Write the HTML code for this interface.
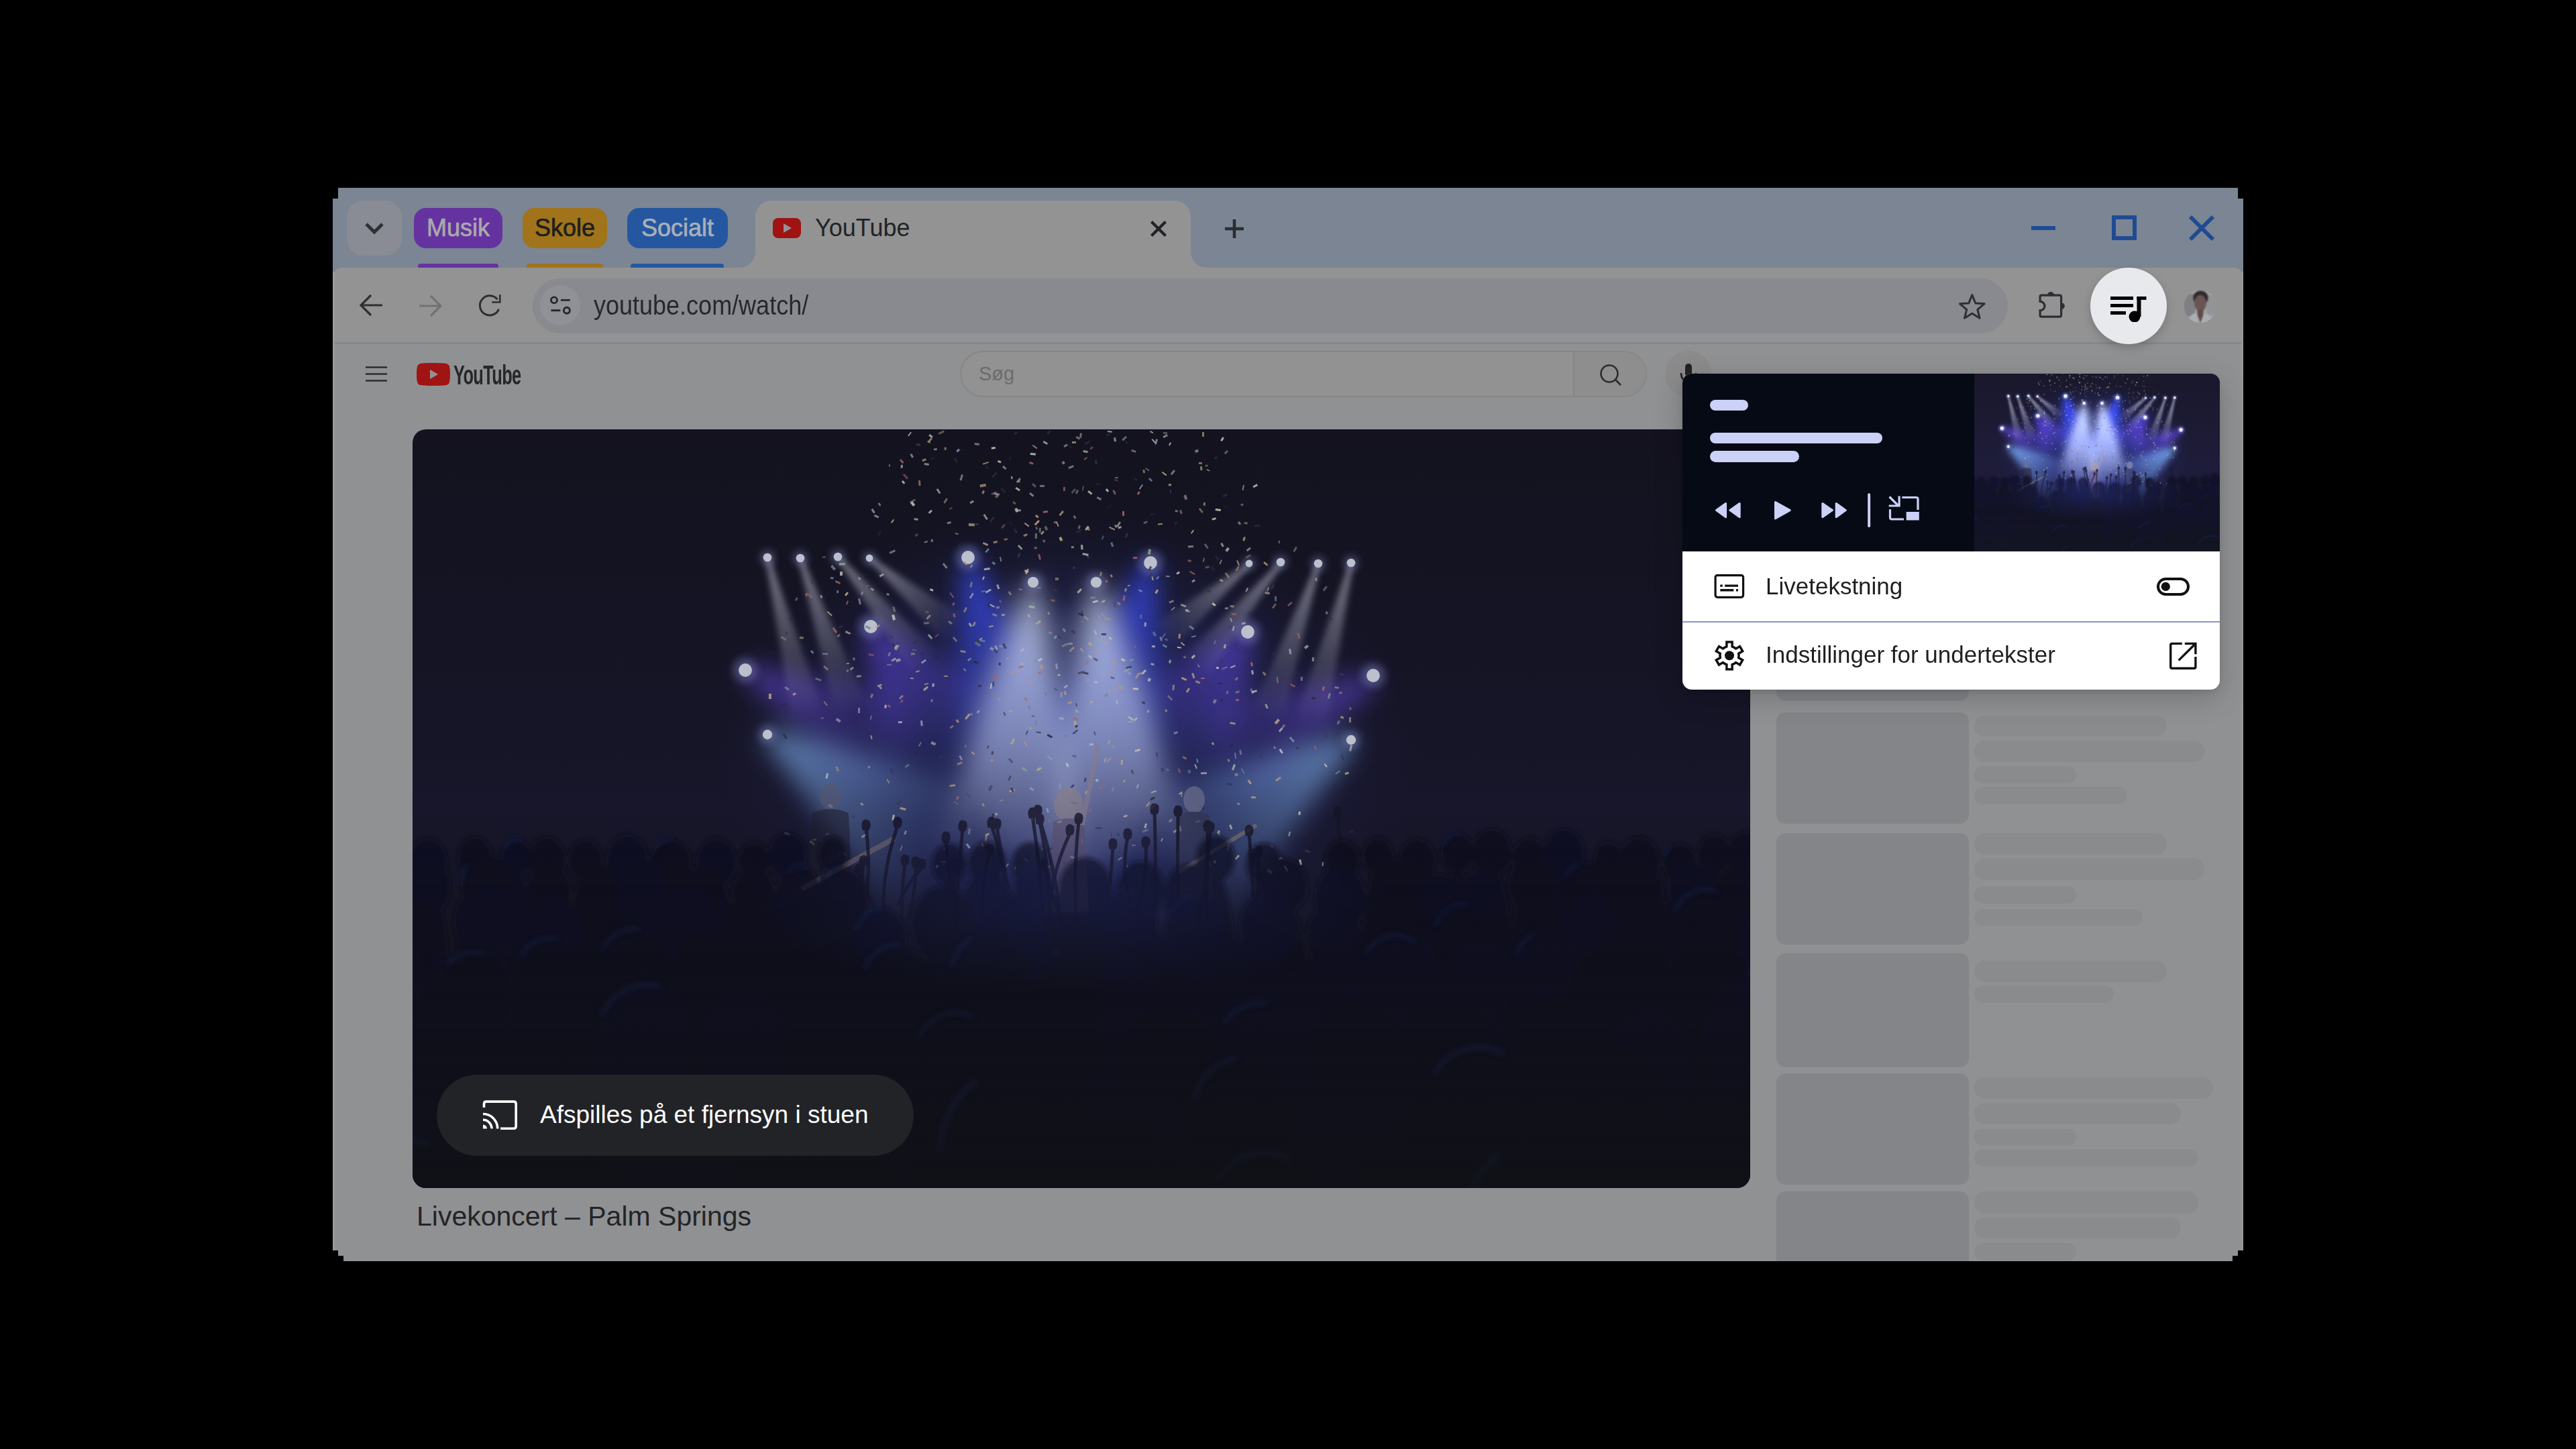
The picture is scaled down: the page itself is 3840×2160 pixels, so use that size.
<!DOCTYPE html>
<html><head><meta charset="utf-8">
<style>
html,body{margin:0;padding:0;width:3840px;height:2160px;overflow:hidden;background:#000;}
body{position:relative;font-family:"Liberation Sans",sans-serif;}
.a{position:absolute;}
.win{left:496px;top:280px;width:2848px;height:1600px;background:#7b8593;overflow:hidden;}
.notch{background:#000;position:absolute;}
.tb{left:496px;top:399px;width:2848px;height:114px;background:#939393;border-radius:14px 14px 0 0;}
.page{left:496px;top:510px;width:2848px;height:1370px;background:#909193;border-top:3px solid #868787;box-sizing:border-box;}
.chip{position:absolute;top:310px;height:60px;border-radius:18px;font-size:36px;line-height:60px;text-align:center;-webkit-text-stroke:0.7px currentColor;}
.uline{position:absolute;top:393px;height:6px;border-radius:4px 4px 0 0;}
.txt{white-space:nowrap;}
</style></head>
<body>
<div class="a win"></div>
<!-- tab strip -->
<div class="a" style="left:517px;top:299px;width:82px;height:82px;border-radius:24px;background:#898c94"></div>
<svg class="a" style="left:541px;top:328px" width="34" height="26" viewBox="0 0 34 26"><path d="M5 6 L17 18 L29 6" fill="none" stroke="#2e3035" stroke-width="5"/></svg>

<div class="chip" style="left:617px;width:132px;background:#6533a0;color:#a9a9ab">Musik</div>
<div class="uline" style="left:623px;width:120px;background:#6633a3"></div>
<div class="chip" style="left:779px;width:126px;background:#a1741b;color:#1f1f1f">Skole</div>
<div class="uline" style="left:785px;width:114px;background:#a1741b"></div>
<div class="chip" style="left:935px;width:150px;background:#2457a0;color:#a9afb9">Socialt</div>
<div class="uline" style="left:940px;width:139px;background:#2457a0"></div>

<!-- active tab -->
<div class="a" style="left:1126px;top:299px;width:649px;height:100px;background:#939393;border-radius:24px 24px 0 0"></div>
<div class="a" style="left:1102px;top:375px;width:24px;height:24px;background:radial-gradient(circle at 0 0,transparent 23.5px,#939393 24.5px)"></div>
<div class="a" style="left:1775px;top:375px;width:24px;height:24px;background:radial-gradient(circle at 24px 0,transparent 23.5px,#939393 24.5px)"></div>
<svg class="a" style="left:1152px;top:325px" width="42" height="30" viewBox="0 0 42 30"><rect x="0" y="0" width="42" height="30" rx="8" fill="#a01313"/><path d="M16 8 L28 15 L16 22Z" fill="#939393"/></svg>
<div class="a txt" style="left:1215px;top:318px;font-size:36px;line-height:44px;color:#222326">YouTube</div>
<svg class="a" style="left:1713px;top:327px" width="28" height="28" viewBox="0 0 28 28"><path d="M3.5 3.5 L24.5 24.5 M24.5 3.5 L3.5 24.5" stroke="#222326" stroke-width="4.3"/></svg>
<svg class="a" style="left:1824px;top:325px" width="32" height="32" viewBox="0 0 32 32"><path d="M16 2 V30 M2 16 H30" stroke="#2a2c30" stroke-width="4.5"/></svg>

<!-- window controls -->
<div class="a" style="left:3028px;top:337px;width:36px;height:6px;background:#1f4b94"></div>
<div class="a" style="left:3148px;top:321px;width:25px;height:25px;border:6px solid #1f4b94"></div>
<svg class="a" style="left:3262px;top:320px" width="40" height="40" viewBox="0 0 40 40"><path d="M3 3 L37 37 M37 3 L3 37" stroke="#1f4b94" stroke-width="6"/></svg>

<!-- toolbar -->
<div class="a tb"></div>
<svg class="a" style="left:534px;top:435px" width="40" height="40" viewBox="0 0 40 40"><path d="M36 20 H6 M19 5 L4 20 L19 35" fill="none" stroke="#2d2f33" stroke-width="3.2"/></svg>
<svg class="a" style="left:621px;top:436px" width="40" height="40" viewBox="0 0 40 40"><path d="M4 20 H34 M21 5 L36 20 L21 35" fill="none" stroke="#707276" stroke-width="3.2"/></svg>
<svg class="a" style="left:700px;top:425px" width="60" height="60" viewBox="700 425 60 60"><path d="M741.50 446.41 A14.6 14.6 0 1 0 743.54 460.87" fill="none" stroke="#2d2f33" stroke-width="3"/><path d="M733.3 450.55 H745.25 V439.2" fill="none" stroke="#2d2f33" stroke-width="2.6"/></svg>
<div class="a" style="left:794px;top:415px;width:2199px;height:82px;border-radius:41px;background:#888a8f"></div>
<div class="a" style="left:805px;top:425px;width:60px;height:60px;border-radius:30px;background:#8f9196"></div>
<svg class="a" style="left:810px;top:430px" width="50" height="50" viewBox="810 430 50 50" fill="none" stroke="#26282c" stroke-width="2.9"><circle cx="826" cy="447.4" r="4.5"/><path d="M836 447.4 H849.8 M821.4 462.7 H835.3"/><circle cx="844.9" cy="462.7" r="4.5"/></svg>
<div class="a txt" style="left:885px;top:430px;font-size:40px;line-height:50px;color:#26282c;transform:scaleX(0.9);transform-origin:0 0">youtube.com/watch/</div>
<svg class="a" style="left:2910px;top:428px" width="60" height="60" viewBox="2910 428 60 60"><path d="M2939.80 439.60 L2944.80 451.92 L2958.06 452.87 L2947.88 461.43 L2951.09 474.33 L2939.80 467.30 L2928.51 474.33 L2931.72 461.43 L2921.54 452.87 L2934.80 451.92Z" fill="none" stroke="#2d2f33" stroke-width="3" stroke-linejoin="round"/></svg>
<svg class="a" style="left:3030px;top:425px" width="60" height="60" viewBox="3030 425 60 60"><path d="M3041.1 449.3 V442.2 Q3041.1 440.1 3043.2 440.1 H3070.5 Q3072.6 440.1 3072.6 442.2 V470 Q3072.6 472.1 3070.5 472.1 H3043.2 Q3041.1 472.1 3041.1 470 V462.9 A6.8 6.8 0 0 0 3041.1 449.3Z" fill="none" stroke="#2d2f33" stroke-width="3.2"/><path d="M3051.8 440.1 A5.2 5.2 0 0 1 3062.2 440.1Z" fill="#2d2f33"/><path d="M3072.6 451 A5.2 5.2 0 0 1 3072.6 461.4Z" fill="#2d2f33"/></svg>
<div class="a" style="left:3116px;top:399px;width:114px;height:114px;border-radius:57px;background:#e8e9ed;box-shadow:0 6px 14px rgba(0,0,0,0.18);z-index:5"></div>
<svg class="a" style="left:3140px;top:436px;z-index:6" width="66" height="44" viewBox="0 0 66 44"><rect x="6" y="6" width="34" height="5" fill="#000"/><rect x="6" y="17" width="34" height="5" fill="#000"/><rect x="6" y="28" width="23" height="5" fill="#000"/><rect x="45.5" y="6" width="6" height="30" fill="#000"/><rect x="45.5" y="6" width="14" height="5" fill="#000"/><circle cx="42" cy="36" r="8.5" fill="#000"/></svg>
<svg class="a" style="left:3255px;top:432px" width="50" height="50" viewBox="0 0 50 50"><defs><clipPath id="avc"><circle cx="25" cy="24.5" r="24.5"/></clipPath><filter id="avb"><feGaussianBlur stdDeviation="0.8"/></filter></defs><g clip-path="url(#avc)"><g filter="url(#avb)"><rect width="50" height="50" fill="#9fa0a2"/><rect x="0" y="6" width="17" height="34" fill="#7f8083"/><rect x="34" y="8" width="16" height="30" fill="#939497"/><ellipse cx="25.5" cy="12" rx="11.5" ry="11" fill="#2e2c2e"/><ellipse cx="25" cy="20.5" rx="9" ry="12.5" fill="#6a5552"/><rect x="20.5" y="30" width="9" height="20" fill="#5f4a48"/><path d="M4 50 Q8 37 19 34 L25 50 L31 34 Q42 37 46 50Z" fill="#acadaf"/></g></g></svg>

<!-- page -->
<div class="a page"></div>
<svg class="a" style="left:544px;top:545px" width="34" height="26" viewBox="0 0 34 26"><path d="M1 2.5 H33 M1 12.5 H33 M1 22.5 H33" stroke="#2b2c2e" stroke-width="2.6"/></svg>
<svg class="a" style="left:621px;top:541px" width="50" height="34" viewBox="0 0 50 34"><path d="M48.9 5.3 C48.3 3.2 46.7 1.6 44.6 1 C40.8 0 25 0 25 0 C25 0 9.2 0 5.4 1 C3.3 1.6 1.7 3.2 1.1 5.3 C0 9.1 0 17 0 17 C0 17 0 24.9 1.1 28.7 C1.7 30.8 3.3 32.4 5.4 33 C9.2 34 25 34 25 34 C25 34 40.8 34 44.6 33 C46.7 32.4 48.3 30.8 48.9 28.7 C50 24.9 50 17 50 17 C50 17 50 9.1 48.9 5.3Z" fill="#a01414"/><path d="M20 10 L32 17 L20 24Z" fill="#939393"/></svg>
<div class="a txt" style="left:676px;top:536px;font-size:41px;line-height:46px;font-weight:bold;color:#262729;letter-spacing:-1px;transform:scaleX(0.62);transform-origin:0 0">YouTube</div>
<div class="a" style="left:1431px;top:523px;width:1024px;height:69px;box-sizing:border-box;border:2px solid #868687;border-radius:35px;background:#929293"></div>
<div class="a" style="left:2345px;top:525px;width:2px;height:65px;background:#868687"></div>
<div class="a" style="left:2347px;top:525px;width:106px;height:65px;border-radius:0 33px 33px 0;background:#8e8e8f"></div>
<div class="a txt" style="left:1459px;top:539px;font-size:29px;line-height:36px;color:#6b6c6e">Søg</div>
<svg class="a" style="left:2382px;top:540px" width="38" height="38" viewBox="0 0 38 38"><circle cx="17" cy="17" r="12.5" fill="none" stroke="#2b2c2e" stroke-width="2.6"/><path d="M26 26 L34 34" stroke="#2b2c2e" stroke-width="2.6"/></svg>
<div class="a" style="left:2482px;top:523px;width:69px;height:69px;border-radius:35px;background:#8b8b8c"></div>
<!-- video -->
<svg class="a" style="left:615px;top:640px" width="1994" height="1131" viewBox="0 0 1994 1131"><defs><clipPath id="vclip"><rect width="1994" height="1131" rx="20"/></clipPath></defs><g clip-path="url(#vclip)"><defs>
<linearGradient id="bgG" x1="0" y1="0" x2="0" y2="1"><stop offset="0" stop-color="#13121e"/><stop offset="0.5" stop-color="#17162a"/><stop offset="1" stop-color="#131419"/></linearGradient>
<radialGradient id="glowG"><stop offset="0" stop-color="#3848a8" stop-opacity="0.55"/><stop offset="0.55" stop-color="#303890" stop-opacity="0.3"/><stop offset="1" stop-color="#202050" stop-opacity="0"/></radialGradient>
<radialGradient id="hazeG"><stop offset="0" stop-color="#3a4aa8" stop-opacity="0.22"/><stop offset="1" stop-color="#3a4aa8" stop-opacity="0"/></radialGradient>
<linearGradient id="botG" x1="0" y1="0" x2="0" y2="1"><stop offset="0.55" stop-color="#111216" stop-opacity="0"/><stop offset="0.85" stop-color="#111216" stop-opacity="0.45"/><stop offset="1" stop-color="#111216" stop-opacity="0.8"/></linearGradient>
<filter id="blurW" filterUnits="userSpaceOnUse" x="0" y="0" width="1994" height="1131"><feGaussianBlur stdDeviation="18"/></filter>
<filter id="blurT" filterUnits="userSpaceOnUse" x="0" y="0" width="1994" height="1131"><feGaussianBlur stdDeviation="5"/></filter>
<filter id="blurS" filterUnits="userSpaceOnUse" x="0" y="0" width="1994" height="1131"><feGaussianBlur stdDeviation="6"/></filter>
<filter id="blurH" filterUnits="userSpaceOnUse" x="0" y="0" width="1994" height="1131"><feGaussianBlur stdDeviation="4"/></filter>
<filter id="blurC" filterUnits="userSpaceOnUse" x="0" y="0" width="1994" height="1131"><feGaussianBlur stdDeviation="3"/></filter>
<linearGradient id="b1" gradientUnits="userSpaceOnUse" x1="828" y1="191" x2="905" y2="500"><stop offset="0" stop-color="#3a4cf0" stop-opacity="0.85"/><stop offset="0.5" stop-color="#3a4cf0" stop-opacity="0.42"/><stop offset="1" stop-color="#3a4cf0" stop-opacity="0"/></linearGradient><linearGradient id="b2" gradientUnits="userSpaceOnUse" x1="1100" y1="196" x2="1023" y2="505"><stop offset="0" stop-color="#3a4cf0" stop-opacity="0.85"/><stop offset="0.5" stop-color="#3a4cf0" stop-opacity="0.42"/><stop offset="1" stop-color="#3a4cf0" stop-opacity="0"/></linearGradient><linearGradient id="b3" gradientUnits="userSpaceOnUse" x1="683" y1="294" x2="800" y2="470"><stop offset="0" stop-color="#6048e0" stop-opacity="0.7"/><stop offset="0.5" stop-color="#6048e0" stop-opacity="0.35"/><stop offset="1" stop-color="#6048e0" stop-opacity="0"/></linearGradient><linearGradient id="b4" gradientUnits="userSpaceOnUse" x1="1245" y1="300" x2="1128" y2="476"><stop offset="0" stop-color="#6048e0" stop-opacity="0.7"/><stop offset="0.5" stop-color="#6048e0" stop-opacity="0.35"/><stop offset="1" stop-color="#6048e0" stop-opacity="0"/></linearGradient><linearGradient id="b5" gradientUnits="userSpaceOnUse" x1="496" y1="359" x2="740" y2="480"><stop offset="0" stop-color="#6048d0" stop-opacity="0.7"/><stop offset="0.5" stop-color="#6048d0" stop-opacity="0.35"/><stop offset="1" stop-color="#6048d0" stop-opacity="0"/></linearGradient><linearGradient id="b6" gradientUnits="userSpaceOnUse" x1="1432" y1="373" x2="1188" y2="494"><stop offset="0" stop-color="#6048d0" stop-opacity="0.7"/><stop offset="0.5" stop-color="#6048d0" stop-opacity="0.35"/><stop offset="1" stop-color="#6048d0" stop-opacity="0"/></linearGradient><linearGradient id="b7" gradientUnits="userSpaceOnUse" x1="529" y1="455" x2="800" y2="640"><stop offset="0" stop-color="#80b0f0" stop-opacity="0.7"/><stop offset="0.5" stop-color="#80b0f0" stop-opacity="0.35"/><stop offset="1" stop-color="#80b0f0" stop-opacity="0"/></linearGradient><linearGradient id="b8" gradientUnits="userSpaceOnUse" x1="1399" y1="464" x2="1128" y2="649"><stop offset="0" stop-color="#80b0f0" stop-opacity="0.7"/><stop offset="0.5" stop-color="#80b0f0" stop-opacity="0.35"/><stop offset="1" stop-color="#80b0f0" stop-opacity="0"/></linearGradient><linearGradient id="b9" gradientUnits="userSpaceOnUse" x1="925" y1="228" x2="890" y2="660"><stop offset="0" stop-color="#d0dcf8" stop-opacity="0.8"/><stop offset="0.6" stop-color="#d0dcf8" stop-opacity="0.40"/><stop offset="1" stop-color="#d0dcf8" stop-opacity="0"/></linearGradient><linearGradient id="b10" gradientUnits="userSpaceOnUse" x1="1019" y1="228" x2="1055" y2="660"><stop offset="0" stop-color="#d0dcf8" stop-opacity="0.8"/><stop offset="0.6" stop-color="#d0dcf8" stop-opacity="0.40"/><stop offset="1" stop-color="#d0dcf8" stop-opacity="0"/></linearGradient><linearGradient id="b11" gradientUnits="userSpaceOnUse" x1="529" y1="191" x2="590" y2="430"><stop offset="0" stop-color="#c8c8dc" stop-opacity="0.55"/><stop offset="0.5" stop-color="#c8c8dc" stop-opacity="0.28"/><stop offset="1" stop-color="#c8c8dc" stop-opacity="0"/></linearGradient><linearGradient id="b12" gradientUnits="userSpaceOnUse" x1="1399" y1="201" x2="1338" y2="440"><stop offset="0" stop-color="#c8c8dc" stop-opacity="0.55"/><stop offset="0.5" stop-color="#c8c8dc" stop-opacity="0.28"/><stop offset="1" stop-color="#c8c8dc" stop-opacity="0"/></linearGradient><linearGradient id="b13" gradientUnits="userSpaceOnUse" x1="578" y1="192" x2="655" y2="420"><stop offset="0" stop-color="#c8c8dc" stop-opacity="0.55"/><stop offset="0.5" stop-color="#c8c8dc" stop-opacity="0.28"/><stop offset="1" stop-color="#c8c8dc" stop-opacity="0"/></linearGradient><linearGradient id="b14" gradientUnits="userSpaceOnUse" x1="1350" y1="202" x2="1273" y2="430"><stop offset="0" stop-color="#c8c8dc" stop-opacity="0.55"/><stop offset="0.5" stop-color="#c8c8dc" stop-opacity="0.28"/><stop offset="1" stop-color="#c8c8dc" stop-opacity="0"/></linearGradient><linearGradient id="b15" gradientUnits="userSpaceOnUse" x1="634" y1="190" x2="765" y2="350"><stop offset="0" stop-color="#c8c8dc" stop-opacity="0.55"/><stop offset="0.5" stop-color="#c8c8dc" stop-opacity="0.28"/><stop offset="1" stop-color="#c8c8dc" stop-opacity="0"/></linearGradient><linearGradient id="b16" gradientUnits="userSpaceOnUse" x1="1294" y1="200" x2="1163" y2="360"><stop offset="0" stop-color="#c8c8dc" stop-opacity="0.55"/><stop offset="0.5" stop-color="#c8c8dc" stop-opacity="0.28"/><stop offset="1" stop-color="#c8c8dc" stop-opacity="0"/></linearGradient><linearGradient id="b17" gradientUnits="userSpaceOnUse" x1="681" y1="192" x2="810" y2="300"><stop offset="0" stop-color="#c8c8dc" stop-opacity="0.55"/><stop offset="0.5" stop-color="#c8c8dc" stop-opacity="0.28"/><stop offset="1" stop-color="#c8c8dc" stop-opacity="0"/></linearGradient><linearGradient id="b18" gradientUnits="userSpaceOnUse" x1="1247" y1="202" x2="1118" y2="310"><stop offset="0" stop-color="#c8c8dc" stop-opacity="0.55"/><stop offset="0.5" stop-color="#c8c8dc" stop-opacity="0.28"/><stop offset="1" stop-color="#c8c8dc" stop-opacity="0"/></linearGradient></defs><g id="scene"><rect width="1994" height="1131" fill="url(#bgG)"/><ellipse cx="975" cy="470" rx="520" ry="360" fill="url(#glowG)"/><g filter="url(#blurW)"><polygon points="822,192 803,525 1007,475 834,190" fill="url(#b1)"/><polygon points="1094,195 921,480 1125,530 1106,197" fill="url(#b2)"/><polygon points="676,298 708,531 892,409 690,290" fill="url(#b3)"/><polygon points="1238,296 1036,415 1220,537 1252,304" fill="url(#b4)"/><polygon points="492,366 700,561 780,399 500,352" fill="url(#b5)"/><polygon points="1428,366 1148,413 1228,575 1436,380" fill="url(#b6)"/><polygon points="524,462 732,739 868,541 534,448" fill="url(#b7)"/><polygon points="1394,457 1060,550 1196,748 1404,471" fill="url(#b8)"/><polygon points="919,228 770,650 1010,670 931,228" fill="url(#b9)"/><polygon points="1013,228 935,670 1175,650 1025,228" fill="url(#b10)"/><ellipse cx="972" cy="470" rx="140" ry="200" fill="#b0bce8" opacity="0.16"/></g><g filter="url(#blurT)"><polygon points="526,192 567,436 613,424 532,190" fill="url(#b11)"/><polygon points="1396,200 1315,434 1361,446 1402,202" fill="url(#b12)"/><polygon points="575,193 632,428 678,412 581,191" fill="url(#b13)"/><polygon points="1347,201 1250,422 1296,438 1353,203" fill="url(#b14)"/><polygon points="632,192 746,365 784,335 636,188" fill="url(#b15)"/><polygon points="1292,198 1144,345 1182,375 1296,202" fill="url(#b16)"/><polygon points="679,194 795,318 825,282 683,190" fill="url(#b17)"/><polygon points="1245,200 1103,292 1133,328 1249,204" fill="url(#b18)"/></g><g filter="url(#blurS)"><circle cx="529" cy="191" r="11" fill="#a8b4ff" opacity="0.3"/><circle cx="1399" cy="199" r="11" fill="#a8b4ff" opacity="0.3"/><circle cx="578" cy="192" r="11" fill="#a8b4ff" opacity="0.3"/><circle cx="1350" cy="200" r="11" fill="#a8b4ff" opacity="0.3"/><circle cx="634" cy="190" r="11" fill="#a8b4ff" opacity="0.3"/><circle cx="1294" cy="198" r="11" fill="#a8b4ff" opacity="0.3"/><circle cx="681" cy="192" r="10" fill="#a8b4ff" opacity="0.3"/><circle cx="1247" cy="200" r="10" fill="#a8b4ff" opacity="0.3"/><circle cx="828" cy="191" r="18" fill="#a8b4ff" opacity="0.3"/><circle cx="1100" cy="199" r="18" fill="#a8b4ff" opacity="0.3"/><circle cx="925" cy="228" r="14" fill="#a8b4ff" opacity="0.3"/><circle cx="683" cy="294" r="18" fill="#a8b4ff" opacity="0.3"/><circle cx="1245" cy="302" r="18" fill="#a8b4ff" opacity="0.3"/><circle cx="496" cy="359" r="18" fill="#a8b4ff" opacity="0.3"/><circle cx="1432" cy="367" r="18" fill="#a8b4ff" opacity="0.3"/><circle cx="529" cy="455" r="13" fill="#a8b4ff" opacity="0.3"/><circle cx="1399" cy="463" r="13" fill="#a8b4ff" opacity="0.3"/><circle cx="1019" cy="228" r="14" fill="#a8b4ff" opacity="0.3"/></g><circle cx="529" cy="191" r="6.3" fill="#bcc0cc"/><circle cx="1399" cy="199" r="6.3" fill="#bcc0cc"/><circle cx="578" cy="192" r="6.3" fill="#bcc0cc"/><circle cx="1350" cy="200" r="6.3" fill="#bcc0cc"/><circle cx="634" cy="190" r="6.3" fill="#bcc0cc"/><circle cx="1294" cy="198" r="6.3" fill="#bcc0cc"/><circle cx="681" cy="192" r="5.4" fill="#bcc0cc"/><circle cx="1247" cy="200" r="5.4" fill="#bcc0cc"/><circle cx="828" cy="191" r="9.9" fill="#bcc0cc"/><circle cx="1100" cy="199" r="9.9" fill="#bcc0cc"/><circle cx="925" cy="228" r="8.1" fill="#bcc0cc"/><circle cx="683" cy="294" r="9.9" fill="#bcc0cc"/><circle cx="1245" cy="302" r="9.9" fill="#bcc0cc"/><circle cx="496" cy="359" r="9.9" fill="#bcc0cc"/><circle cx="1432" cy="367" r="9.9" fill="#bcc0cc"/><circle cx="529" cy="455" r="7.2" fill="#bcc0cc"/><circle cx="1399" cy="463" r="7.2" fill="#bcc0cc"/><circle cx="1019" cy="228" r="8.1" fill="#bcc0cc"/><g><rect x="608" y="610" width="7" height="3" fill="#383850" opacity="0.66" transform="rotate(33 608 610)"/><rect x="1088" y="405" width="5" height="3" fill="#383850" opacity="0.81" transform="rotate(26 1088 405)"/><rect x="944" y="648" width="7" height="3" fill="#b89878" opacity="0.82" transform="rotate(28 944 648)"/><rect x="893" y="42" width="4" height="3" fill="#2a2a3a" opacity="0.60" transform="rotate(108 893 42)"/><rect x="809" y="154" width="5" height="2" fill="#8898b8" opacity="0.63" transform="rotate(15 809 154)"/><rect x="868" y="364" width="9" height="2" fill="#a06868" opacity="0.68" transform="rotate(46 868 364)"/><rect x="1047" y="71" width="5" height="2" fill="#b89878" opacity="0.55" transform="rotate(3 1047 71)"/><rect x="1063" y="248" width="8" height="3" fill="#a06868" opacity="0.80" transform="rotate(102 1063 248)"/><rect x="931" y="178" width="4" height="3" fill="#98b098" opacity="0.51" transform="rotate(174 931 178)"/><rect x="963" y="307" width="6" height="3" fill="#383850" opacity="0.54" transform="rotate(34 963 307)"/><rect x="883" y="278" width="5" height="3" fill="#c8c0b0" opacity="0.59" transform="rotate(175 883 278)"/><rect x="1182" y="170" width="8" height="3" fill="#98b098" opacity="0.48" transform="rotate(53 1182 170)"/><rect x="961" y="138" width="7" height="2" fill="#c8c0b0" opacity="0.65" transform="rotate(66 961 138)"/><rect x="1309" y="379" width="8" height="2" fill="#a06868" opacity="0.82" transform="rotate(28 1309 379)"/><rect x="887" y="165" width="5" height="3" fill="#a06868" opacity="0.76" transform="rotate(169 887 165)"/><rect x="712" y="52" width="4" height="2" fill="#8898b8" opacity="0.56" transform="rotate(92 712 52)"/><rect x="1156" y="194" width="5" height="3" fill="#a06868" opacity="0.67" transform="rotate(12 1156 194)"/><rect x="613" y="431" width="4" height="2" fill="#b89878" opacity="0.48" transform="rotate(165 613 431)"/><rect x="782" y="31" width="5" height="3" fill="#98b098" opacity="0.61" transform="rotate(175 782 31)"/><rect x="1095" y="588" width="7" height="3" fill="#c0c0c8" opacity="0.72" transform="rotate(105 1095 588)"/><rect x="1277" y="236" width="6" height="2" fill="#98b098" opacity="0.67" transform="rotate(108 1277 236)"/><rect x="1094" y="360" width="8" height="3" fill="#c0c0c8" opacity="0.81" transform="rotate(133 1094 360)"/><rect x="719" y="575" width="8" height="3" fill="#c8c0b0" opacity="0.75" transform="rotate(103 719 575)"/><rect x="1091" y="60" width="5" height="3" fill="#b8a880" opacity="0.62" transform="rotate(75 1091 60)"/><rect x="984" y="485" width="6" height="3" fill="#383850" opacity="0.46" transform="rotate(15 984 485)"/><rect x="699" y="152" width="7" height="3" fill="#2a2a3a" opacity="0.57" transform="rotate(111 699 152)"/><rect x="771" y="7" width="6" height="3" fill="#c0c0c8" opacity="0.79" transform="rotate(36 771 7)"/><rect x="595" y="329" width="5" height="3" fill="#708890" opacity="0.81" transform="rotate(45 595 329)"/><rect x="1039" y="145" width="9" height="2" fill="#b8a880" opacity="0.83" transform="rotate(24 1039 145)"/><rect x="1173" y="560" width="9" height="3" fill="#2a2a3a" opacity="0.66" transform="rotate(30 1173 560)"/><rect x="721" y="343" width="7" height="3" fill="#c8c0b0" opacity="0.65" transform="rotate(152 721 343)"/><rect x="1009" y="468" width="6" height="3" fill="#c0c0c8" opacity="0.63" transform="rotate(3 1009 468)"/><rect x="1164" y="176" width="8" height="3" fill="#98b098" opacity="0.65" transform="rotate(177 1164 176)"/><rect x="669" y="633" width="5" height="3" fill="#b89878" opacity="0.79" transform="rotate(32 669 633)"/><rect x="1184" y="514" width="9" height="3" fill="#c0c0c8" opacity="0.63" transform="rotate(179 1184 514)"/><rect x="1023" y="523" width="4" height="4" fill="#c0c0c8" opacity="0.65" transform="rotate(130 1023 523)"/><rect x="1180" y="4" width="7" height="3" fill="#b8a880" opacity="0.66" transform="rotate(90 1180 4)"/><rect x="1109" y="540" width="8" height="2" fill="#98b098" opacity="0.89" transform="rotate(162 1109 540)"/><rect x="1042" y="601" width="6" height="2" fill="#383850" opacity="0.64" transform="rotate(79 1042 601)"/><rect x="720" y="182" width="9" height="3" fill="#708890" opacity="0.81" transform="rotate(156 720 182)"/><rect x="1215" y="98" width="7" height="3" fill="#2a2a3a" opacity="0.88" transform="rotate(151 1215 98)"/><rect x="1009" y="146" width="7" height="3" fill="#c0c0c8" opacity="0.69" transform="rotate(131 1009 146)"/><rect x="1188" y="206" width="6" height="3" fill="#a06868" opacity="0.59" transform="rotate(162 1188 206)"/><rect x="745" y="328" width="6" height="2" fill="#708890" opacity="0.46" transform="rotate(1 745 328)"/><rect x="909" y="640" width="6" height="3" fill="#2a2a3a" opacity="0.49" transform="rotate(101 909 640)"/><rect x="1321" y="303" width="9" height="3" fill="#a06868" opacity="0.66" transform="rotate(73 1321 303)"/><rect x="1198" y="315" width="6" height="2" fill="#8898b8" opacity="0.51" transform="rotate(111 1198 315)"/><rect x="987" y="128" width="5" height="3" fill="#b8a880" opacity="0.56" transform="rotate(58 987 128)"/><rect x="912" y="329" width="6" height="3" fill="#c8c0b0" opacity="0.56" transform="rotate(153 912 329)"/><rect x="1094" y="288" width="6" height="3" fill="#c0c0c8" opacity="0.69" transform="rotate(95 1094 288)"/><rect x="1324" y="570" width="5" height="3" fill="#c8c0b0" opacity="0.84" transform="rotate(98 1324 570)"/><rect x="1029" y="535" width="6" height="3" fill="#a06868" opacity="0.80" transform="rotate(166 1029 535)"/><rect x="731" y="621" width="8" height="2" fill="#b89878" opacity="0.49" transform="rotate(113 731 621)"/><rect x="1183" y="376" width="6" height="3" fill="#383850" opacity="0.74" transform="rotate(65 1183 376)"/><rect x="909" y="503" width="9" height="3" fill="#98b098" opacity="0.54" transform="rotate(34 909 503)"/><rect x="982" y="555" width="9" height="2" fill="#2a2a3a" opacity="0.48" transform="rotate(11 982 555)"/><rect x="1220" y="281" width="6" height="2" fill="#b89878" opacity="0.83" transform="rotate(67 1220 281)"/><rect x="1146" y="120" width="6" height="3" fill="#a06868" opacity="0.72" transform="rotate(73 1146 120)"/><rect x="1309" y="600" width="7" height="2" fill="#b8a880" opacity="0.81" transform="rotate(105 1309 600)"/><rect x="1396" y="513" width="6" height="3" fill="#b8a880" opacity="0.80" transform="rotate(158 1396 513)"/><rect x="713" y="505" width="8" height="2" fill="#2a2a3a" opacity="0.50" transform="rotate(62 713 505)"/><rect x="865" y="197" width="5" height="3" fill="#98b098" opacity="0.63" transform="rotate(33 865 197)"/><rect x="683" y="503" width="4" height="3" fill="#8898b8" opacity="0.65" transform="rotate(133 683 503)"/><rect x="611" y="333" width="8" height="3" fill="#8898b8" opacity="0.56" transform="rotate(2 611 333)"/><rect x="1289" y="335" width="9" height="3" fill="#2a2a3a" opacity="0.81" transform="rotate(179 1289 335)"/><rect x="763" y="50" width="7" height="3" fill="#c0c0c8" opacity="0.62" transform="rotate(8 763 50)"/><rect x="865" y="394" width="6" height="3" fill="#708890" opacity="0.72" transform="rotate(51 865 394)"/><rect x="812" y="432" width="5" height="3" fill="#b89878" opacity="0.80" transform="rotate(53 812 432)"/><rect x="1159" y="387" width="7" height="3" fill="#b89878" opacity="0.85" transform="rotate(123 1159 387)"/><rect x="974" y="653" width="4" height="3" fill="#2a2a3a" opacity="0.56" transform="rotate(77 974 653)"/><rect x="919" y="275" width="5" height="3" fill="#c0c0c8" opacity="0.51" transform="rotate(64 919 275)"/><rect x="558" y="301" width="5" height="3" fill="#383850" opacity="0.82" transform="rotate(76 558 301)"/><rect x="1131" y="90" width="5" height="2" fill="#383850" opacity="0.85" transform="rotate(87 1131 90)"/><rect x="1065" y="237" width="5" height="3" fill="#c8c0b0" opacity="0.54" transform="rotate(102 1065 237)"/><rect x="1024" y="331" width="7" height="2" fill="#b89878" opacity="0.45" transform="rotate(123 1024 331)"/><rect x="1057" y="147" width="5" height="3" fill="#c0c0c8" opacity="0.70" transform="rotate(164 1057 147)"/><rect x="989" y="417" width="6" height="3" fill="#b8a880" opacity="0.67" transform="rotate(38 989 417)"/><rect x="1380" y="529" width="8" height="3" fill="#2a2a3a" opacity="0.64" transform="rotate(138 1380 529)"/><rect x="1081" y="431" width="6" height="3" fill="#c0c0c8" opacity="0.64" transform="rotate(134 1081 431)"/><rect x="707" y="244" width="4" height="3" fill="#98b098" opacity="0.64" transform="rotate(14 707 244)"/><rect x="732" y="398" width="7" height="3" fill="#b8a880" opacity="0.58" transform="rotate(138 732 398)"/><rect x="672" y="242" width="5" height="3" fill="#8898b8" opacity="0.65" transform="rotate(102 672 242)"/><rect x="850" y="617" width="5" height="3" fill="#b8a880" opacity="0.75" transform="rotate(66 850 617)"/><rect x="1251" y="386" width="8" height="3" fill="#708890" opacity="0.69" transform="rotate(66 1251 386)"/><rect x="1174" y="117" width="8" height="3" fill="#b89878" opacity="0.55" transform="rotate(51 1174 117)"/><rect x="1111" y="15" width="8" height="3" fill="#8898b8" opacity="0.80" transform="rotate(105 1111 15)"/><rect x="1186" y="55" width="4" height="3" fill="#98b098" opacity="0.46" transform="rotate(162 1186 55)"/><rect x="898" y="539" width="8" height="3" fill="#b8a880" opacity="0.79" transform="rotate(163 898 539)"/><rect x="863" y="260" width="6" height="4" fill="#2a2a3a" opacity="0.67" transform="rotate(121 863 260)"/><rect x="1014" y="408" width="4" height="3" fill="#b8a880" opacity="0.83" transform="rotate(177 1014 408)"/><rect x="865" y="532" width="8" height="4" fill="#383850" opacity="0.61" transform="rotate(115 865 532)"/><rect x="1119" y="610" width="5" height="2" fill="#c0c0c8" opacity="0.59" transform="rotate(114 1119 610)"/><rect x="984" y="257" width="7" height="3" fill="#2a2a3a" opacity="0.59" transform="rotate(159 984 257)"/><rect x="1077" y="72" width="5" height="3" fill="#2a2a3a" opacity="0.72" transform="rotate(42 1077 72)"/><rect x="1006" y="186" width="5" height="3" fill="#383850" opacity="0.87" transform="rotate(56 1006 186)"/><rect x="1164" y="363" width="8" height="3" fill="#b8a880" opacity="0.75" transform="rotate(72 1164 363)"/><rect x="844" y="143" width="5" height="3" fill="#383850" opacity="0.80" transform="rotate(176 844 143)"/><rect x="999" y="610" width="8" height="3" fill="#a06868" opacity="0.77" transform="rotate(81 999 610)"/><rect x="874" y="400" width="5" height="2" fill="#8898b8" opacity="0.86" transform="rotate(58 874 400)"/><rect x="1034" y="490" width="7" height="2" fill="#c0c0c8" opacity="0.45" transform="rotate(103 1034 490)"/><rect x="827" y="542" width="8" height="2" fill="#383850" opacity="0.49" transform="rotate(49 827 542)"/><rect x="640" y="631" width="8" height="3" fill="#708890" opacity="0.54" transform="rotate(142 640 631)"/><rect x="1017" y="450" width="6" height="2" fill="#2a2a3a" opacity="0.52" transform="rotate(74 1017 450)"/><rect x="1103" y="205" width="4" height="3" fill="#98b098" opacity="0.61" transform="rotate(84 1103 205)"/><rect x="712" y="638" width="7" height="2" fill="#2a2a3a" opacity="0.56" transform="rotate(68 712 638)"/><rect x="1181" y="372" width="6" height="2" fill="#a06868" opacity="0.86" transform="rotate(178 1181 372)"/><rect x="1218" y="619" width="9" height="3" fill="#98b098" opacity="0.57" transform="rotate(100 1218 619)"/><rect x="944" y="624" width="8" height="3" fill="#98b098" opacity="0.50" transform="rotate(149 944 624)"/><rect x="709" y="410" width="5" height="3" fill="#a06868" opacity="0.63" transform="rotate(32 709 410)"/><rect x="1184" y="59" width="5" height="2" fill="#708890" opacity="0.80" transform="rotate(22 1184 59)"/><rect x="631" y="225" width="8" height="3" fill="#a06868" opacity="0.80" transform="rotate(25 631 225)"/><rect x="1103" y="219" width="6" height="2" fill="#b8a880" opacity="0.89" transform="rotate(72 1103 219)"/><rect x="708" y="521" width="7" height="2" fill="#b8a880" opacity="0.59" transform="rotate(60 708 521)"/><rect x="1113" y="220" width="5" height="2" fill="#8898b8" opacity="0.79" transform="rotate(128 1113 220)"/><rect x="1285" y="233" width="7" height="2" fill="#383850" opacity="0.90" transform="rotate(128 1285 233)"/><rect x="759" y="467" width="7" height="2" fill="#98b098" opacity="0.51" transform="rotate(119 759 467)"/><rect x="666" y="220" width="4" height="3" fill="#98b098" opacity="0.65" transform="rotate(48 666 220)"/><rect x="958" y="221" width="5" height="4" fill="#b8a880" opacity="0.56" transform="rotate(1 958 221)"/><rect x="1068" y="362" width="4" height="2" fill="#c0c0c8" opacity="0.59" transform="rotate(32 1068 362)"/><rect x="807" y="443" width="6" height="3" fill="#b89878" opacity="0.52" transform="rotate(145 807 443)"/><rect x="909" y="348" width="5" height="3" fill="#c0c0c8" opacity="0.57" transform="rotate(61 909 348)"/><rect x="1016" y="375" width="6" height="3" fill="#c0c0c8" opacity="0.63" transform="rotate(7 1016 375)"/><rect x="835" y="228" width="8" height="3" fill="#708890" opacity="0.79" transform="rotate(102 835 228)"/><rect x="977" y="321" width="9" height="3" fill="#708890" opacity="0.82" transform="rotate(154 977 321)"/><rect x="1075" y="344" width="6" height="2" fill="#8898b8" opacity="0.78" transform="rotate(163 1075 344)"/><rect x="1369" y="394" width="8" height="3" fill="#98b098" opacity="0.56" transform="rotate(107 1369 394)"/><rect x="1293" y="434" width="8" height="4" fill="#b8a880" opacity="0.84" transform="rotate(132 1293 434)"/><rect x="773" y="278" width="8" height="3" fill="#c8c0b0" opacity="0.51" transform="rotate(134 773 278)"/><rect x="1133" y="582" width="6" height="3" fill="#b89878" opacity="0.60" transform="rotate(131 1133 582)"/><rect x="1219" y="262" width="6" height="3" fill="#b89878" opacity="0.65" transform="rotate(8 1219 262)"/><rect x="871" y="95" width="8" height="3" fill="#a06868" opacity="0.58" transform="rotate(158 871 95)"/><rect x="1220" y="609" width="5" height="3" fill="#2a2a3a" opacity="0.46" transform="rotate(64 1220 609)"/><rect x="669" y="369" width="7" height="3" fill="#b89878" opacity="0.74" transform="rotate(171 669 369)"/><rect x="626" y="202" width="8" height="4" fill="#708890" opacity="0.77" transform="rotate(49 626 202)"/><rect x="1281" y="619" width="4" height="3" fill="#a06868" opacity="0.57" transform="rotate(55 1281 619)"/><rect x="1322" y="475" width="5" height="3" fill="#383850" opacity="0.85" transform="rotate(145 1322 475)"/><rect x="792" y="199" width="9" height="3" fill="#98b098" opacity="0.66" transform="rotate(50 792 199)"/><rect x="859" y="50" width="9" height="2" fill="#b89878" opacity="0.72" transform="rotate(163 859 50)"/><rect x="1198" y="188" width="8" height="3" fill="#383850" opacity="0.46" transform="rotate(50 1198 188)"/><rect x="1018" y="593" width="9" height="3" fill="#2a2a3a" opacity="0.48" transform="rotate(0 1018 593)"/><rect x="809" y="42" width="8" height="3" fill="#2a2a3a" opacity="0.80" transform="rotate(58 809 42)"/><rect x="621" y="558" width="7" height="4" fill="#c0c0c8" opacity="0.50" transform="rotate(31 621 558)"/><rect x="938" y="287" width="7" height="3" fill="#a06868" opacity="0.57" transform="rotate(46 938 287)"/><rect x="814" y="172" width="5" height="4" fill="#2a2a3a" opacity="0.84" transform="rotate(9 814 172)"/><rect x="1048" y="12" width="6" height="3" fill="#8898b8" opacity="0.84" transform="rotate(80 1048 12)"/><rect x="1131" y="20" width="5" height="2" fill="#c8c0b0" opacity="0.81" transform="rotate(115 1131 20)"/><rect x="988" y="205" width="4" height="3" fill="#383850" opacity="0.80" transform="rotate(112 988 205)"/><rect x="1143" y="505" width="7" height="3" fill="#a06868" opacity="0.52" transform="rotate(68 1143 505)"/><rect x="1133" y="323" width="8" height="4" fill="#2a2a3a" opacity="0.68" transform="rotate(26 1133 323)"/><rect x="999" y="271" width="7" height="2" fill="#2a2a3a" opacity="0.64" transform="rotate(100 999 271)"/><rect x="973" y="50" width="4" height="4" fill="#c8c0b0" opacity="0.55" transform="rotate(137 973 50)"/><rect x="967" y="160" width="6" height="4" fill="#b8a880" opacity="0.88" transform="rotate(66 967 160)"/><rect x="1187" y="657" width="7" height="3" fill="#c0c0c8" opacity="0.66" transform="rotate(159 1187 657)"/><rect x="1312" y="259" width="8" height="3" fill="#a06868" opacity="0.64" transform="rotate(141 1312 259)"/><rect x="987" y="531" width="6" height="3" fill="#2a2a3a" opacity="0.65" transform="rotate(137 987 531)"/><rect x="718" y="135" width="6" height="2" fill="#b8a880" opacity="0.88" transform="rotate(124 718 135)"/><rect x="917" y="374" width="7" height="3" fill="#b89878" opacity="0.52" transform="rotate(19 917 374)"/><rect x="1236" y="505" width="9" height="2" fill="#708890" opacity="0.65" transform="rotate(58 1236 505)"/><rect x="782" y="339" width="5" height="2" fill="#2a2a3a" opacity="0.69" transform="rotate(74 782 339)"/><rect x="989" y="90" width="8" height="3" fill="#708890" opacity="0.52" transform="rotate(131 989 90)"/><rect x="1043" y="470" width="6" height="3" fill="#8898b8" opacity="0.62" transform="rotate(41 1043 470)"/><rect x="1209" y="403" width="5" height="3" fill="#2a2a3a" opacity="0.70" transform="rotate(134 1209 403)"/><rect x="1270" y="197" width="7" height="3" fill="#b8a880" opacity="0.75" transform="rotate(39 1270 197)"/><rect x="1124" y="417" width="4" height="3" fill="#b89878" opacity="0.67" transform="rotate(71 1124 417)"/><rect x="890" y="490" width="8" height="3" fill="#383850" opacity="0.59" transform="rotate(46 890 490)"/><rect x="621" y="604" width="5" height="3" fill="#8898b8" opacity="0.47" transform="rotate(164 621 604)"/><rect x="577" y="309" width="6" height="3" fill="#b8a880" opacity="0.60" transform="rotate(4 577 309)"/><rect x="986" y="246" width="5" height="3" fill="#2a2a3a" opacity="0.62" transform="rotate(160 986 246)"/><rect x="1000" y="31" width="7" height="3" fill="#98b098" opacity="0.82" transform="rotate(11 1000 31)"/><rect x="1046" y="90" width="7" height="3" fill="#b89878" opacity="0.52" transform="rotate(65 1046 90)"/><rect x="930" y="127" width="5" height="3" fill="#b89878" opacity="0.87" transform="rotate(42 930 127)"/><rect x="1000" y="361" width="8" height="3" fill="#383850" opacity="0.85" transform="rotate(14 1000 361)"/><rect x="972" y="456" width="5" height="2" fill="#a06868" opacity="0.76" transform="rotate(3 972 456)"/><rect x="589" y="244" width="5" height="3" fill="#a06868" opacity="0.74" transform="rotate(96 589 244)"/><rect x="998" y="239" width="8" height="3" fill="#98b098" opacity="0.90" transform="rotate(133 998 239)"/><rect x="1233" y="205" width="8" height="3" fill="#b89878" opacity="0.52" transform="rotate(122 1233 205)"/><rect x="1043" y="168" width="7" height="3" fill="#8898b8" opacity="0.62" transform="rotate(71 1043 168)"/><rect x="1101" y="372" width="5" height="4" fill="#c0c0c8" opacity="0.73" transform="rotate(115 1101 372)"/><rect x="815" y="548" width="5" height="3" fill="#a06868" opacity="0.74" transform="rotate(120 815 548)"/><rect x="1309" y="458" width="9" height="3" fill="#8898b8" opacity="0.73" transform="rotate(49 1309 458)"/><rect x="919" y="262" width="9" height="4" fill="#98b098" opacity="0.84" transform="rotate(9 919 262)"/><rect x="1072" y="355" width="8" height="3" fill="#383850" opacity="0.84" transform="rotate(163 1072 355)"/><rect x="1239" y="113" width="4" height="3" fill="#8898b8" opacity="0.55" transform="rotate(157 1239 113)"/><rect x="921" y="94" width="7" height="3" fill="#8898b8" opacity="0.81" transform="rotate(39 921 94)"/><rect x="1102" y="322" width="5" height="3" fill="#c8c0b0" opacity="0.71" transform="rotate(3 1102 322)"/><rect x="930" y="213" width="4" height="2" fill="#383850" opacity="0.47" transform="rotate(99 930 213)"/><rect x="1177" y="52" width="5" height="3" fill="#a06868" opacity="0.90" transform="rotate(179 1177 52)"/><rect x="814" y="270" width="4" height="3" fill="#383850" opacity="0.48" transform="rotate(101 814 270)"/><rect x="558" y="411" width="5" height="4" fill="#2a2a3a" opacity="0.71" transform="rotate(156 558 411)"/><rect x="966" y="367" width="4" height="3" fill="#98b098" opacity="0.88" transform="rotate(160 966 367)"/><rect x="1041" y="7" width="7" height="3" fill="#2a2a3a" opacity="0.63" transform="rotate(143 1041 7)"/><rect x="1159" y="507" width="5" height="4" fill="#708890" opacity="0.56" transform="rotate(72 1159 507)"/><rect x="1033" y="256" width="6" height="3" fill="#b8a880" opacity="0.73" transform="rotate(146 1033 256)"/><rect x="728" y="44" width="7" height="3" fill="#a06868" opacity="0.78" transform="rotate(48 728 44)"/><rect x="1056" y="139" width="8" height="3" fill="#c0c0c8" opacity="0.61" transform="rotate(122 1056 139)"/><rect x="1137" y="120" width="4" height="3" fill="#98b098" opacity="0.59" transform="rotate(9 1137 120)"/><rect x="1215" y="355" width="9" height="2" fill="#b8a880" opacity="0.48" transform="rotate(158 1215 355)"/><rect x="641" y="212" width="6" height="4" fill="#c0c0c8" opacity="0.82" transform="rotate(90 641 212)"/><rect x="766" y="46" width="6" height="3" fill="#b8a880" opacity="0.69" transform="rotate(159 766 46)"/><rect x="770" y="290" width="8" height="3" fill="#98b098" opacity="0.50" transform="rotate(174 770 290)"/><rect x="791" y="488" width="6" height="3" fill="#383850" opacity="0.55" transform="rotate(151 791 488)"/><rect x="659" y="340" width="4" height="3" fill="#c8c0b0" opacity="0.47" transform="rotate(80 659 340)"/><rect x="744" y="36" width="6" height="3" fill="#8898b8" opacity="0.78" transform="rotate(59 744 36)"/><rect x="786" y="653" width="8" height="2" fill="#2a2a3a" opacity="0.50" transform="rotate(178 786 653)"/><rect x="731" y="76" width="5" height="3" fill="#c0c0c8" opacity="0.84" transform="rotate(47 731 76)"/><rect x="921" y="533" width="7" height="3" fill="#8898b8" opacity="0.88" transform="rotate(35 921 533)"/><rect x="754" y="157" width="5" height="3" fill="#a06868" opacity="0.48" transform="rotate(136 754 157)"/><rect x="873" y="574" width="4" height="4" fill="#c0c0c8" opacity="0.50" transform="rotate(146 873 574)"/><rect x="977" y="24" width="6" height="3" fill="#98b098" opacity="0.64" transform="rotate(150 977 24)"/><rect x="918" y="450" width="6" height="2" fill="#383850" opacity="0.73" transform="rotate(117 918 450)"/><rect x="925" y="579" width="5" height="3" fill="#b89878" opacity="0.82" transform="rotate(78 925 579)"/><rect x="796" y="624" width="5" height="2" fill="#c0c0c8" opacity="0.76" transform="rotate(138 796 624)"/><rect x="1078" y="621" width="6" height="2" fill="#a06868" opacity="0.78" transform="rotate(179 1078 621)"/><rect x="1083" y="238" width="6" height="3" fill="#8898b8" opacity="0.64" transform="rotate(26 1083 238)"/><rect x="1106" y="301" width="7" height="4" fill="#708890" opacity="0.56" transform="rotate(62 1106 301)"/><rect x="697" y="382" width="5" height="3" fill="#98b098" opacity="0.75" transform="rotate(52 697 382)"/><rect x="1170" y="491" width="6" height="2" fill="#8898b8" opacity="0.71" transform="rotate(75 1170 491)"/><rect x="776" y="403" width="4" height="3" fill="#8898b8" opacity="0.62" transform="rotate(107 776 403)"/><rect x="950" y="581" width="5" height="3" fill="#a06868" opacity="0.49" transform="rotate(82 950 581)"/><rect x="1112" y="240" width="6" height="3" fill="#b8a880" opacity="0.90" transform="rotate(120 1112 240)"/><rect x="1146" y="317" width="7" height="2" fill="#b89878" opacity="0.90" transform="rotate(40 1146 317)"/><rect x="1288" y="261" width="8" height="3" fill="#b89878" opacity="0.48" transform="rotate(126 1288 261)"/><rect x="861" y="260" width="8" height="2" fill="#c8c0b0" opacity="0.80" transform="rotate(30 861 260)"/><rect x="1097" y="598" width="9" height="3" fill="#708890" opacity="0.66" transform="rotate(159 1097 598)"/><rect x="754" y="352" width="5" height="3" fill="#383850" opacity="0.70" transform="rotate(54 754 352)"/><rect x="1009" y="336" width="6" height="3" fill="#c8c0b0" opacity="0.64" transform="rotate(44 1009 336)"/><rect x="1041" y="368" width="6" height="3" fill="#383850" opacity="0.52" transform="rotate(19 1041 368)"/><rect x="1297" y="640" width="6" height="3" fill="#98b098" opacity="0.64" transform="rotate(155 1297 640)"/><rect x="1148" y="540" width="8" height="2" fill="#b89878" opacity="0.63" transform="rotate(96 1148 540)"/><rect x="987" y="326" width="9" height="3" fill="#b89878" opacity="0.63" transform="rotate(137 987 326)"/><rect x="911" y="354" width="7" height="3" fill="#a06868" opacity="0.74" transform="rotate(161 911 354)"/><rect x="1174" y="585" width="7" height="3" fill="#708890" opacity="0.73" transform="rotate(163 1174 585)"/><rect x="931" y="145" width="4" height="3" fill="#708890" opacity="0.60" transform="rotate(69 931 145)"/><rect x="837" y="108" width="6" height="3" fill="#98b098" opacity="0.77" transform="rotate(147 837 108)"/><rect x="944" y="392" width="5" height="3" fill="#a06868" opacity="0.61" transform="rotate(64 944 392)"/><rect x="687" y="395" width="6" height="3" fill="#c8c0b0" opacity="0.48" transform="rotate(110 687 395)"/><rect x="685" y="427" width="6" height="2" fill="#98b098" opacity="0.49" transform="rotate(103 685 427)"/><rect x="919" y="209" width="8" height="3" fill="#b89878" opacity="0.90" transform="rotate(116 919 209)"/><rect x="993" y="91" width="6" height="3" fill="#a06868" opacity="0.71" transform="rotate(111 993 91)"/><rect x="992" y="449" width="9" height="2" fill="#2a2a3a" opacity="0.76" transform="rotate(141 992 449)"/><rect x="1297" y="447" width="6" height="3" fill="#98b098" opacity="0.88" transform="rotate(131 1297 447)"/><rect x="1364" y="235" width="8" height="3" fill="#708890" opacity="0.59" transform="rotate(127 1364 235)"/><rect x="865" y="274" width="7" height="3" fill="#8898b8" opacity="0.66" transform="rotate(22 865 274)"/><rect x="1288" y="249" width="7" height="3" fill="#708890" opacity="0.68" transform="rotate(89 1288 249)"/><rect x="1037" y="318" width="7" height="3" fill="#b8a880" opacity="0.54" transform="rotate(139 1037 318)"/><rect x="873" y="231" width="7" height="3" fill="#c8c0b0" opacity="0.71" transform="rotate(70 873 231)"/><rect x="1123" y="305" width="8" height="2" fill="#708890" opacity="0.60" transform="rotate(127 1123 305)"/><rect x="904" y="172" width="8" height="3" fill="#98b098" opacity="0.81" transform="rotate(46 904 172)"/><rect x="768" y="168" width="5" height="2" fill="#98b098" opacity="0.70" transform="rotate(163 768 168)"/><rect x="875" y="321" width="5" height="3" fill="#8898b8" opacity="0.68" transform="rotate(18 875 321)"/><rect x="628" y="295" width="9" height="3" fill="#a06868" opacity="0.80" transform="rotate(54 628 295)"/><rect x="996" y="144" width="5" height="3" fill="#98b098" opacity="0.52" transform="rotate(110 996 144)"/><rect x="1144" y="214" width="5" height="3" fill="#c8c0b0" opacity="0.84" transform="rotate(145 1144 214)"/><rect x="941" y="164" width="4" height="3" fill="#8898b8" opacity="0.58" transform="rotate(46 941 164)"/><rect x="742" y="370" width="5" height="2" fill="#8898b8" opacity="0.87" transform="rotate(5 742 370)"/><rect x="1147" y="542" width="5" height="2" fill="#c0c0c8" opacity="0.69" transform="rotate(144 1147 542)"/><rect x="1219" y="436" width="8" height="3" fill="#b8a880" opacity="0.74" transform="rotate(10 1219 436)"/><rect x="884" y="143" width="7" height="3" fill="#a06868" opacity="0.48" transform="rotate(131 884 143)"/><rect x="602" y="612" width="6" height="2" fill="#98b098" opacity="0.54" transform="rotate(168 602 612)"/><rect x="854" y="242" width="6" height="2" fill="#98b098" opacity="0.51" transform="rotate(171 854 242)"/><rect x="832" y="595" width="9" height="3" fill="#708890" opacity="0.69" transform="rotate(98 832 595)"/><rect x="1061" y="122" width="7" height="3" fill="#a06868" opacity="0.85" transform="rotate(90 1061 122)"/><rect x="1107" y="127" width="7" height="2" fill="#383850" opacity="0.49" transform="rotate(169 1107 127)"/><rect x="1021" y="100" width="7" height="3" fill="#708890" opacity="0.87" transform="rotate(28 1021 100)"/><rect x="1210" y="13" width="6" height="3" fill="#c8c0b0" opacity="0.85" transform="rotate(123 1210 13)"/><rect x="900" y="652" width="5" height="2" fill="#c8c0b0" opacity="0.80" transform="rotate(109 900 652)"/><rect x="1006" y="145" width="6" height="3" fill="#b89878" opacity="0.71" transform="rotate(44 1006 145)"/><rect x="1252" y="347" width="6" height="3" fill="#a06868" opacity="0.87" transform="rotate(82 1252 347)"/><rect x="803" y="140" width="6" height="3" fill="#c0c0c8" opacity="0.56" transform="rotate(165 803 140)"/><rect x="942" y="153" width="6" height="3" fill="#b89878" opacity="0.81" transform="rotate(131 942 153)"/><rect x="945" y="144" width="6" height="4" fill="#b8a880" opacity="0.48" transform="rotate(67 945 144)"/><rect x="1228" y="277" width="7" height="3" fill="#a06868" opacity="0.62" transform="rotate(179 1228 277)"/><rect x="882" y="489" width="8" height="2" fill="#708890" opacity="0.88" transform="rotate(90 882 489)"/><rect x="1367" y="280" width="5" height="2" fill="#2a2a3a" opacity="0.88" transform="rotate(29 1367 280)"/><rect x="860" y="472" width="5" height="2" fill="#2a2a3a" opacity="0.62" transform="rotate(122 860 472)"/><rect x="876" y="97" width="8" height="4" fill="#b89878" opacity="0.51" transform="rotate(131 876 97)"/><rect x="766" y="345" width="8" height="3" fill="#8898b8" opacity="0.88" transform="rotate(145 766 345)"/><rect x="856" y="54" width="5" height="2" fill="#383850" opacity="0.53" transform="rotate(56 856 54)"/><rect x="882" y="319" width="8" height="3" fill="#2a2a3a" opacity="0.66" transform="rotate(63 882 319)"/><rect x="896" y="107" width="5" height="3" fill="#b89878" opacity="0.46" transform="rotate(38 896 107)"/><rect x="1032" y="280" width="9" height="3" fill="#b89878" opacity="0.53" transform="rotate(11 1032 280)"/><rect x="999" y="172" width="7" height="3" fill="#c8c0b0" opacity="0.78" transform="rotate(85 999 172)"/><rect x="1059" y="382" width="7" height="3" fill="#8898b8" opacity="0.60" transform="rotate(106 1059 382)"/><rect x="745" y="107" width="7" height="4" fill="#c0c0c8" opacity="0.87" transform="rotate(52 745 107)"/><rect x="827" y="266" width="8" height="3" fill="#b89878" opacity="0.61" transform="rotate(115 827 266)"/><rect x="1327" y="369" width="6" height="3" fill="#708890" opacity="0.76" transform="rotate(93 1327 369)"/><rect x="817" y="329" width="8" height="3" fill="#b8a880" opacity="0.67" transform="rotate(10 817 329)"/><rect x="716" y="318" width="7" height="4" fill="#2a2a3a" opacity="0.47" transform="rotate(50 716 318)"/><rect x="957" y="385" width="6" height="2" fill="#383850" opacity="0.50" transform="rotate(35 957 385)"/><rect x="1070" y="233" width="4" height="2" fill="#c0c0c8" opacity="0.58" transform="rotate(155 1070 233)"/><rect x="1167" y="226" width="5" height="3" fill="#8898b8" opacity="0.89" transform="rotate(150 1167 226)"/><rect x="677" y="605" width="8" height="3" fill="#c0c0c8" opacity="0.50" transform="rotate(146 677 605)"/><rect x="1047" y="534" width="7" height="3" fill="#708890" opacity="0.87" transform="rotate(116 1047 534)"/><rect x="889" y="648" width="6" height="2" fill="#8898b8" opacity="0.89" transform="rotate(125 889 648)"/><rect x="867" y="573" width="8" height="3" fill="#2a2a3a" opacity="0.74" transform="rotate(102 867 573)"/><rect x="680" y="233" width="4" height="2" fill="#a06868" opacity="0.55" transform="rotate(143 680 233)"/><rect x="990" y="408" width="5" height="2" fill="#2a2a3a" opacity="0.57" transform="rotate(78 990 408)"/><rect x="1141" y="453" width="6" height="3" fill="#8898b8" opacity="0.69" transform="rotate(164 1141 453)"/><rect x="1375" y="383" width="6" height="3" fill="#98b098" opacity="0.58" transform="rotate(10 1375 383)"/><rect x="926" y="569" width="6" height="3" fill="#a06868" opacity="0.87" transform="rotate(45 926 569)"/><rect x="764" y="263" width="6" height="4" fill="#383850" opacity="0.64" transform="rotate(53 764 263)"/><rect x="1216" y="268" width="5" height="3" fill="#98b098" opacity="0.64" transform="rotate(173 1216 268)"/><rect x="667" y="415" width="8" height="3" fill="#8898b8" opacity="0.71" transform="rotate(90 667 415)"/><rect x="1022" y="277" width="4" height="2" fill="#b89878" opacity="0.73" transform="rotate(33 1022 277)"/><rect x="1295" y="520" width="9" height="3" fill="#b89878" opacity="0.77" transform="rotate(144 1295 520)"/><rect x="845" y="313" width="9" height="3" fill="#98b098" opacity="0.45" transform="rotate(10 845 313)"/><rect x="1034" y="307" width="7" height="3" fill="#2a2a3a" opacity="0.71" transform="rotate(179 1034 307)"/><rect x="964" y="429" width="7" height="3" fill="#c8c0b0" opacity="0.51" transform="rotate(8 964 429)"/><rect x="920" y="48" width="6" height="3" fill="#a06868" opacity="0.83" transform="rotate(19 920 48)"/><rect x="984" y="321" width="7" height="3" fill="#98b098" opacity="0.60" transform="rotate(177 984 321)"/><rect x="1053" y="381" width="8" height="3" fill="#b89878" opacity="0.81" transform="rotate(34 1053 381)"/><rect x="890" y="241" width="6" height="3" fill="#c8c0b0" opacity="0.46" transform="rotate(57 890 241)"/><rect x="659" y="576" width="4" height="3" fill="#383850" opacity="0.65" transform="rotate(113 659 576)"/><rect x="1235" y="478" width="7" height="3" fill="#8898b8" opacity="0.55" transform="rotate(78 1235 478)"/><rect x="1232" y="405" width="5" height="3" fill="#a06868" opacity="0.79" transform="rotate(179 1232 405)"/><rect x="1118" y="142" width="7" height="2" fill="#b8a880" opacity="0.79" transform="rotate(176 1118 142)"/><rect x="774" y="465" width="7" height="4" fill="#c8c0b0" opacity="0.60" transform="rotate(25 774 465)"/><rect x="866" y="480" width="5" height="3" fill="#2a2a3a" opacity="0.60" transform="rotate(95 866 480)"/><rect x="726" y="322" width="9" height="4" fill="#98b098" opacity="0.72" transform="rotate(122 726 322)"/><rect x="618" y="654" width="9" height="3" fill="#98b098" opacity="0.45" transform="rotate(137 618 654)"/><rect x="1066" y="360" width="5" height="3" fill="#8898b8" opacity="0.52" transform="rotate(39 1066 360)"/><rect x="658" y="356" width="6" height="3" fill="#c8c0b0" opacity="0.56" transform="rotate(142 658 356)"/><rect x="805" y="117" width="5" height="2" fill="#a06868" opacity="0.57" transform="rotate(143 805 117)"/><rect x="1007" y="540" width="5" height="3" fill="#b8a880" opacity="0.82" transform="rotate(126 1007 540)"/><rect x="713" y="333" width="6" height="3" fill="#b8a880" opacity="0.52" transform="rotate(108 713 333)"/><rect x="1242" y="290" width="6" height="3" fill="#c0c0c8" opacity="0.66" transform="rotate(165 1242 290)"/><rect x="914" y="399" width="6" height="3" fill="#a06868" opacity="0.67" transform="rotate(57 914 399)"/><rect x="1301" y="441" width="8" height="3" fill="#c8c0b0" opacity="0.46" transform="rotate(122 1301 441)"/><rect x="1102" y="214" width="7" height="3" fill="#383850" opacity="0.84" transform="rotate(89 1102 214)"/><rect x="1103" y="14" width="7" height="2" fill="#c0c0c8" opacity="0.76" transform="rotate(49 1103 14)"/><rect x="1028" y="213" width="6" height="3" fill="#b8a880" opacity="0.56" transform="rotate(101 1028 213)"/><rect x="990" y="10" width="6" height="3" fill="#c0c0c8" opacity="0.50" transform="rotate(31 990 10)"/><rect x="1167" y="338" width="6" height="3" fill="#c8c0b0" opacity="0.81" transform="rotate(136 1167 338)"/><rect x="697" y="293" width="8" height="3" fill="#b8a880" opacity="0.68" transform="rotate(147 697 293)"/><rect x="614" y="352" width="8" height="3" fill="#b89878" opacity="0.58" transform="rotate(40 614 352)"/><rect x="1047" y="258" width="7" height="2" fill="#383850" opacity="0.54" transform="rotate(82 1047 258)"/><rect x="1362" y="451" width="8" height="3" fill="#383850" opacity="0.55" transform="rotate(72 1362 451)"/><rect x="556" y="383" width="7" height="3" fill="#98b098" opacity="0.56" transform="rotate(35 556 383)"/><rect x="1344" y="340" width="6" height="3" fill="#98b098" opacity="0.69" transform="rotate(93 1344 340)"/><rect x="907" y="74" width="8" height="3" fill="#98b098" opacity="0.65" transform="rotate(129 907 74)"/><rect x="933" y="361" width="4" height="3" fill="#a06868" opacity="0.75" transform="rotate(12 933 361)"/><rect x="1043" y="359" width="6" height="3" fill="#b89878" opacity="0.46" transform="rotate(114 1043 359)"/><rect x="1294" y="476" width="7" height="3" fill="#c0c0c8" opacity="0.88" transform="rotate(56 1294 476)"/><rect x="846" y="420" width="5" height="3" fill="#c0c0c8" opacity="0.48" transform="rotate(130 846 420)"/><rect x="925" y="23" width="8" height="2" fill="#b89878" opacity="0.78" transform="rotate(36 925 23)"/><rect x="1301" y="650" width="9" height="3" fill="#98b098" opacity="0.73" transform="rotate(58 1301 650)"/><rect x="999" y="184" width="9" height="3" fill="#c0c0c8" opacity="0.76" transform="rotate(12 999 184)"/><rect x="684" y="456" width="6" height="2" fill="#c8c0b0" opacity="0.62" transform="rotate(74 684 456)"/><rect x="651" y="350" width="4" height="2" fill="#b8a880" opacity="0.70" transform="rotate(177 651 350)"/><rect x="988" y="434" width="7" height="3" fill="#b89878" opacity="0.49" transform="rotate(87 988 434)"/><rect x="1100" y="557" width="8" height="3" fill="#b89878" opacity="0.61" transform="rotate(130 1100 557)"/><rect x="1384" y="427" width="5" height="3" fill="#b8a880" opacity="0.72" transform="rotate(25 1384 427)"/><rect x="1047" y="74" width="5" height="2" fill="#a06868" opacity="0.48" transform="rotate(20 1047 74)"/><rect x="933" y="345" width="4" height="3" fill="#708890" opacity="0.52" transform="rotate(142 933 345)"/><rect x="650" y="256" width="6" height="2" fill="#a06868" opacity="0.81" transform="rotate(111 650 256)"/><rect x="827" y="617" width="8" height="3" fill="#8898b8" opacity="0.87" transform="rotate(52 827 617)"/><rect x="1193" y="466" width="4" height="3" fill="#98b098" opacity="0.76" transform="rotate(53 1193 466)"/><rect x="1146" y="260" width="8" height="3" fill="#98b098" opacity="0.78" transform="rotate(20 1146 260)"/><rect x="1137" y="266" width="7" height="2" fill="#b89878" opacity="0.65" transform="rotate(141 1137 266)"/><rect x="934" y="382" width="5" height="4" fill="#8898b8" opacity="0.65" transform="rotate(70 934 382)"/><rect x="792" y="367" width="6" height="2" fill="#b89878" opacity="0.73" transform="rotate(0 792 367)"/><rect x="762" y="335" width="4" height="3" fill="#2a2a3a" opacity="0.53" transform="rotate(165 762 335)"/><rect x="713" y="306" width="6" height="3" fill="#383850" opacity="0.63" transform="rotate(48 713 306)"/><rect x="785" y="306" width="7" height="2" fill="#a06868" opacity="0.51" transform="rotate(141 785 306)"/><rect x="851" y="557" width="5" height="3" fill="#b89878" opacity="0.62" transform="rotate(65 851 557)"/><rect x="872" y="169" width="6" height="3" fill="#b89878" opacity="0.74" transform="rotate(169 872 169)"/><rect x="768" y="17" width="5" height="2" fill="#98b098" opacity="0.52" transform="rotate(29 768 17)"/><rect x="898" y="462" width="9" height="3" fill="#b8a880" opacity="0.85" transform="rotate(117 898 462)"/><rect x="1083" y="366" width="7" height="3" fill="#b8a880" opacity="0.58" transform="rotate(122 1083 366)"/><rect x="1040" y="309" width="4" height="3" fill="#c8c0b0" opacity="0.86" transform="rotate(47 1040 309)"/><rect x="937" y="237" width="6" height="2" fill="#8898b8" opacity="0.48" transform="rotate(173 937 237)"/><rect x="1346" y="402" width="6" height="3" fill="#2a2a3a" opacity="0.87" transform="rotate(173 1346 402)"/><rect x="731" y="53" width="5" height="3" fill="#c0c0c8" opacity="0.65" transform="rotate(96 731 53)"/><rect x="1152" y="98" width="7" height="3" fill="#a06868" opacity="0.78" transform="rotate(69 1152 98)"/><rect x="1100" y="2" width="5" height="2" fill="#98b098" opacity="0.85" transform="rotate(29 1100 2)"/><rect x="866" y="294" width="7" height="2" fill="#b8a880" opacity="0.77" transform="rotate(168 866 294)"/><rect x="869" y="365" width="9" height="3" fill="#a06868" opacity="0.82" transform="rotate(72 869 365)"/><rect x="718" y="276" width="8" height="4" fill="#c0c0c8" opacity="0.88" transform="rotate(75 718 276)"/><rect x="983" y="408" width="6" height="3" fill="#b89878" opacity="0.82" transform="rotate(163 983 408)"/><rect x="1016" y="340" width="7" height="3" fill="#383850" opacity="0.59" transform="rotate(31 1016 340)"/><rect x="955" y="222" width="6" height="3" fill="#2a2a3a" opacity="0.48" transform="rotate(131 955 222)"/><rect x="1002" y="278" width="8" height="3" fill="#98b098" opacity="0.53" transform="rotate(36 1002 278)"/><rect x="1198" y="643" width="5" height="3" fill="#c8c0b0" opacity="0.89" transform="rotate(108 1198 643)"/><rect x="1231" y="516" width="5" height="4" fill="#b8a880" opacity="0.51" transform="rotate(164 1231 516)"/><rect x="869" y="29" width="6" height="3" fill="#c0c0c8" opacity="0.86" transform="rotate(174 869 29)"/><rect x="867" y="94" width="7" height="3" fill="#8898b8" opacity="0.80" transform="rotate(15 867 94)"/><rect x="1079" y="323" width="4" height="2" fill="#a06868" opacity="0.81" transform="rotate(126 1079 323)"/><rect x="752" y="317" width="5" height="3" fill="#2a2a3a" opacity="0.54" transform="rotate(140 752 317)"/><rect x="1063" y="523" width="4" height="3" fill="#b8a880" opacity="0.59" transform="rotate(108 1063 523)"/><rect x="1057" y="341" width="6" height="3" fill="#c8c0b0" opacity="0.87" transform="rotate(24 1057 341)"/><rect x="1240" y="83" width="8" height="2" fill="#98b098" opacity="0.68" transform="rotate(100 1240 83)"/><rect x="686" y="118" width="7" height="3" fill="#8898b8" opacity="0.85" transform="rotate(57 686 118)"/><rect x="839" y="312" width="8" height="3" fill="#383850" opacity="0.84" transform="rotate(28 839 312)"/><rect x="1145" y="591" width="8" height="3" fill="#c0c0c8" opacity="0.79" transform="rotate(80 1145 591)"/><rect x="853" y="92" width="5" height="3" fill="#c8c0b0" opacity="0.60" transform="rotate(113 853 92)"/><rect x="1319" y="176" width="8" height="3" fill="#708890" opacity="0.60" transform="rotate(120 1319 176)"/><rect x="796" y="27" width="4" height="3" fill="#c8c0b0" opacity="0.54" transform="rotate(99 796 27)"/><rect x="714" y="352" width="7" height="2" fill="#708890" opacity="0.73" transform="rotate(178 714 352)"/><rect x="1041" y="464" width="6" height="3" fill="#b8a880" opacity="0.52" transform="rotate(116 1041 464)"/><rect x="1051" y="601" width="5" height="3" fill="#383850" opacity="0.80" transform="rotate(43 1051 601)"/><rect x="650" y="244" width="6" height="3" fill="#b8a880" opacity="0.89" transform="rotate(128 650 244)"/><rect x="594" y="613" width="8" height="3" fill="#b8a880" opacity="0.46" transform="rotate(40 594 613)"/><rect x="913" y="209" width="6" height="3" fill="#c8c0b0" opacity="0.76" transform="rotate(25 913 209)"/><rect x="775" y="122" width="6" height="3" fill="#c0c0c8" opacity="0.78" transform="rotate(138 775 122)"/><rect x="1073" y="507" width="6" height="3" fill="#2a2a3a" opacity="0.50" transform="rotate(64 1073 507)"/><rect x="1217" y="639" width="4" height="3" fill="#383850" opacity="0.87" transform="rotate(62 1217 639)"/><rect x="1159" y="292" width="8" height="3" fill="#708890" opacity="0.84" transform="rotate(37 1159 292)"/><rect x="1151" y="337" width="4" height="3" fill="#708890" opacity="0.63" transform="rotate(53 1151 337)"/><rect x="1250" y="272" width="6" height="3" fill="#2a2a3a" opacity="0.48" transform="rotate(79 1250 272)"/><rect x="1269" y="361" width="6" height="3" fill="#b89878" opacity="0.66" transform="rotate(52 1269 361)"/><rect x="1072" y="30" width="7" height="3" fill="#c8c0b0" opacity="0.47" transform="rotate(17 1072 30)"/><rect x="902" y="76" width="4" height="3" fill="#b89878" opacity="0.61" transform="rotate(4 902 76)"/><rect x="1217" y="293" width="7" height="2" fill="#383850" opacity="0.74" transform="rotate(18 1217 293)"/><rect x="1218" y="178" width="6" height="4" fill="#c0c0c8" opacity="0.75" transform="rotate(126 1218 178)"/><rect x="1145" y="305" width="7" height="3" fill="#b89878" opacity="0.82" transform="rotate(95 1145 305)"/><rect x="1147" y="369" width="8" height="3" fill="#b89878" opacity="0.88" transform="rotate(24 1147 369)"/><rect x="820" y="498" width="8" height="3" fill="#b89878" opacity="0.60" transform="rotate(159 820 498)"/><rect x="792" y="634" width="6" height="4" fill="#383850" opacity="0.48" transform="rotate(106 792 634)"/><rect x="977" y="383" width="6" height="3" fill="#c0c0c8" opacity="0.57" transform="rotate(145 977 383)"/><rect x="821" y="312" width="6" height="3" fill="#383850" opacity="0.55" transform="rotate(169 821 312)"/><rect x="1242" y="161" width="6" height="3" fill="#b8a880" opacity="0.75" transform="rotate(109 1242 161)"/><rect x="855" y="85" width="9" height="4" fill="#b89878" opacity="0.75" transform="rotate(171 855 85)"/><rect x="1066" y="577" width="6" height="3" fill="#c8c0b0" opacity="0.66" transform="rotate(163 1066 577)"/><rect x="1059" y="493" width="7" height="3" fill="#b8a880" opacity="0.78" transform="rotate(95 1059 493)"/><rect x="713" y="617" width="4" height="3" fill="#2a2a3a" opacity="0.47" transform="rotate(92 713 617)"/><rect x="748" y="132" width="6" height="3" fill="#98b098" opacity="0.79" transform="rotate(11 748 132)"/><rect x="676" y="292" width="8" height="3" fill="#708890" opacity="0.86" transform="rotate(28 676 292)"/><rect x="1058" y="639" width="7" height="2" fill="#c8c0b0" opacity="0.53" transform="rotate(145 1058 639)"/><rect x="835" y="202" width="5" height="2" fill="#b8a880" opacity="0.75" transform="rotate(115 835 202)"/><rect x="1403" y="601" width="7" height="3" fill="#2a2a3a" opacity="0.66" transform="rotate(173 1403 601)"/><rect x="1126" y="10" width="7" height="3" fill="#c8c0b0" opacity="0.61" transform="rotate(155 1126 10)"/><rect x="1140" y="324" width="6" height="2" fill="#c8c0b0" opacity="0.90" transform="rotate(6 1140 324)"/><rect x="1125" y="7" width="6" height="3" fill="#708890" opacity="0.59" transform="rotate(179 1125 7)"/><rect x="1217" y="491" width="4" height="3" fill="#b89878" opacity="0.60" transform="rotate(64 1217 491)"/><rect x="1171" y="350" width="5" height="2" fill="#8898b8" opacity="0.60" transform="rotate(54 1171 350)"/><rect x="947" y="564" width="7" height="3" fill="#8898b8" opacity="0.88" transform="rotate(73 947 564)"/><rect x="776" y="164" width="4" height="3" fill="#c8c0b0" opacity="0.52" transform="rotate(96 776 164)"/><rect x="1168" y="374" width="7" height="3" fill="#b8a880" opacity="0.68" transform="rotate(24 1168 374)"/><rect x="876" y="254" width="4" height="3" fill="#a06868" opacity="0.53" transform="rotate(47 876 254)"/><rect x="1231" y="371" width="5" height="3" fill="#b8a880" opacity="0.49" transform="rotate(129 1231 371)"/><rect x="871" y="65" width="9" height="2" fill="#383850" opacity="0.71" transform="rotate(129 871 65)"/><rect x="1264" y="484" width="6" height="3" fill="#383850" opacity="0.45" transform="rotate(48 1264 484)"/><rect x="550" y="308" width="9" height="3" fill="#708890" opacity="0.60" transform="rotate(32 550 308)"/><rect x="1028" y="273" width="7" height="3" fill="#8898b8" opacity="0.61" transform="rotate(52 1028 273)"/><rect x="981" y="636" width="9" height="3" fill="#c0c0c8" opacity="0.86" transform="rotate(11 981 636)"/><rect x="1041" y="383" width="6" height="3" fill="#8898b8" opacity="0.82" transform="rotate(159 1041 383)"/><rect x="838" y="20" width="7" height="3" fill="#c0c0c8" opacity="0.55" transform="rotate(9 838 20)"/><rect x="947" y="454" width="8" height="3" fill="#2a2a3a" opacity="0.86" transform="rotate(28 947 454)"/><rect x="802" y="243" width="9" height="2" fill="#b89878" opacity="0.45" transform="rotate(53 802 243)"/><rect x="904" y="237" width="5" height="2" fill="#8898b8" opacity="0.65" transform="rotate(18 904 237)"/><rect x="1253" y="359" width="6" height="3" fill="#c0c0c8" opacity="0.76" transform="rotate(81 1253 359)"/><rect x="1008" y="318" width="5" height="3" fill="#b8a880" opacity="0.64" transform="rotate(16 1008 318)"/><rect x="1172" y="33" width="5" height="4" fill="#708890" opacity="0.89" transform="rotate(153 1172 33)"/><rect x="984" y="298" width="7" height="4" fill="#2a2a3a" opacity="0.49" transform="rotate(44 984 298)"/><rect x="1083" y="530" width="6" height="2" fill="#c0c0c8" opacity="0.58" transform="rotate(116 1083 530)"/><rect x="1203" y="598" width="7" height="3" fill="#708890" opacity="0.67" transform="rotate(81 1203 598)"/><rect x="1010" y="19" width="8" height="3" fill="#2a2a3a" opacity="0.85" transform="rotate(146 1010 19)"/><rect x="1110" y="482" width="6" height="2" fill="#2a2a3a" opacity="0.66" transform="rotate(80 1110 482)"/><rect x="1227" y="500" width="9" height="3" fill="#98b098" opacity="0.89" transform="rotate(111 1227 500)"/><rect x="1273" y="409" width="7" height="3" fill="#98b098" opacity="0.79" transform="rotate(66 1273 409)"/><rect x="723" y="317" width="5" height="2" fill="#383850" opacity="0.65" transform="rotate(68 723 317)"/><rect x="1154" y="269" width="5" height="3" fill="#98b098" opacity="0.68" transform="rotate(11 1154 269)"/><rect x="894" y="70" width="4" height="2" fill="#c0c0c8" opacity="0.82" transform="rotate(80 894 70)"/><rect x="857" y="605" width="9" height="3" fill="#b89878" opacity="0.54" transform="rotate(98 857 605)"/><rect x="1216" y="390" width="5" height="2" fill="#708890" opacity="0.83" transform="rotate(101 1216 390)"/><rect x="949" y="272" width="4" height="3" fill="#b89878" opacity="0.61" transform="rotate(72 949 272)"/><rect x="868" y="132" width="9" height="3" fill="#383850" opacity="0.58" transform="rotate(131 868 132)"/><rect x="644" y="630" width="5" height="3" fill="#98b098" opacity="0.80" transform="rotate(56 644 630)"/><rect x="778" y="44" width="5" height="3" fill="#2a2a3a" opacity="0.57" transform="rotate(161 778 44)"/><rect x="863" y="240" width="9" height="3" fill="#c0c0c8" opacity="0.72" transform="rotate(150 863 240)"/><rect x="1360" y="384" width="6" height="3" fill="#a06868" opacity="0.90" transform="rotate(103 1360 384)"/><rect x="809" y="259" width="5" height="3" fill="#a06868" opacity="0.62" transform="rotate(120 809 259)"/><rect x="1209" y="342" width="7" height="3" fill="#383850" opacity="0.80" transform="rotate(122 1209 342)"/><rect x="769" y="380" width="6" height="2" fill="#b89878" opacity="0.71" transform="rotate(169 769 380)"/><rect x="833" y="342" width="6" height="2" fill="#98b098" opacity="0.76" transform="rotate(142 833 342)"/><rect x="744" y="5" width="7" height="2" fill="#c8c0b0" opacity="0.74" transform="rotate(129 744 5)"/><rect x="732" y="404" width="5" height="3" fill="#a06868" opacity="0.57" transform="rotate(124 732 404)"/><rect x="733" y="66" width="9" height="3" fill="#a06868" opacity="0.58" transform="rotate(48 733 66)"/><rect x="753" y="485" width="5" height="4" fill="#2a2a3a" opacity="0.68" transform="rotate(177 753 485)"/><rect x="1204" y="223" width="5" height="3" fill="#b8a880" opacity="0.72" transform="rotate(22 1204 223)"/><rect x="893" y="517" width="8" height="3" fill="#383850" opacity="0.61" transform="rotate(114 893 517)"/><rect x="1216" y="33" width="6" height="3" fill="#708890" opacity="0.68" transform="rotate(134 1216 33)"/><rect x="684" y="236" width="5" height="3" fill="#c0c0c8" opacity="0.53" transform="rotate(32 684 236)"/><rect x="882" y="421" width="6" height="2" fill="#2a2a3a" opacity="0.58" transform="rotate(64 882 421)"/><rect x="1066" y="649" width="4" height="3" fill="#a06868" opacity="0.88" transform="rotate(76 1066 649)"/><rect x="572" y="395" width="5" height="3" fill="#b89878" opacity="0.86" transform="rotate(156 572 395)"/><rect x="996" y="326" width="6" height="2" fill="#b8a880" opacity="0.72" transform="rotate(42 996 326)"/><rect x="1250" y="178" width="7" height="3" fill="#c0c0c8" opacity="0.56" transform="rotate(143 1250 178)"/><rect x="1348" y="221" width="5" height="3" fill="#8898b8" opacity="0.72" transform="rotate(79 1348 221)"/><rect x="920" y="411" width="6" height="4" fill="#708890" opacity="0.71" transform="rotate(71 920 411)"/><rect x="601" y="370" width="9" height="3" fill="#98b098" opacity="0.46" transform="rotate(17 601 370)"/><rect x="921" y="35" width="8" height="3" fill="#c0c0c8" opacity="0.87" transform="rotate(5 921 35)"/><rect x="1037" y="395" width="6" height="3" fill="#708890" opacity="0.87" transform="rotate(130 1037 395)"/><rect x="1024" y="319" width="5" height="3" fill="#8898b8" opacity="0.55" transform="rotate(145 1024 319)"/><rect x="1123" y="218" width="6" height="2" fill="#c8c0b0" opacity="0.57" transform="rotate(2 1123 218)"/><rect x="1031" y="159" width="6" height="2" fill="#8898b8" opacity="0.49" transform="rotate(113 1031 159)"/><rect x="923" y="426" width="5" height="2" fill="#383850" opacity="0.46" transform="rotate(15 923 426)"/><rect x="1393" y="389" width="6" height="3" fill="#383850" opacity="0.73" transform="rotate(155 1393 389)"/><rect x="642" y="294" width="7" height="3" fill="#383850" opacity="0.56" transform="rotate(151 642 294)"/><rect x="1001" y="85" width="7" height="2" fill="#8898b8" opacity="0.45" transform="rotate(101 1001 85)"/><rect x="837" y="245" width="9" height="3" fill="#8898b8" opacity="0.80" transform="rotate(122 837 245)"/><rect x="990" y="435" width="7" height="3" fill="#b8a880" opacity="0.83" transform="rotate(95 990 435)"/><rect x="1250" y="547" width="7" height="3" fill="#b8a880" opacity="0.72" transform="rotate(3 1250 547)"/><rect x="562" y="281" width="8" height="3" fill="#2a2a3a" opacity="0.72" transform="rotate(19 562 281)"/><rect x="1167" y="499" width="7" height="2" fill="#c8c0b0" opacity="0.73" transform="rotate(64 1167 499)"/><rect x="1131" y="84" width="4" height="3" fill="#b8a880" opacity="0.78" transform="rotate(174 1131 84)"/><rect x="1119" y="505" width="5" height="3" fill="#2a2a3a" opacity="0.55" transform="rotate(84 1119 505)"/><rect x="1067" y="155" width="7" height="3" fill="#383850" opacity="0.68" transform="rotate(109 1067 155)"/><rect x="1005" y="520" width="6" height="3" fill="#2a2a3a" opacity="0.63" transform="rotate(104 1005 520)"/><rect x="730" y="556" width="8" height="4" fill="#383850" opacity="0.69" transform="rotate(149 730 556)"/><rect x="877" y="190" width="7" height="2" fill="#b8a880" opacity="0.64" transform="rotate(79 877 190)"/><rect x="917" y="158" width="6" height="3" fill="#b8a880" opacity="0.66" transform="rotate(159 917 158)"/><rect x="864" y="379" width="8" height="2" fill="#c8c0b0" opacity="0.89" transform="rotate(100 864 379)"/><rect x="971" y="296" width="6" height="3" fill="#8898b8" opacity="0.64" transform="rotate(56 971 296)"/><rect x="635" y="240" width="4" height="3" fill="#c0c0c8" opacity="0.48" transform="rotate(86 635 240)"/><rect x="728" y="345" width="7" height="4" fill="#98b098" opacity="0.79" transform="rotate(162 728 345)"/><rect x="730" y="438" width="6" height="3" fill="#c8c0b0" opacity="0.71" transform="rotate(177 730 438)"/><rect x="1401" y="471" width="9" height="3" fill="#c0c0c8" opacity="0.68" transform="rotate(102 1401 471)"/><rect x="866" y="326" width="9" height="3" fill="#383850" opacity="0.73" transform="rotate(41 866 326)"/><rect x="1207" y="169" width="6" height="3" fill="#c8c0b0" opacity="0.64" transform="rotate(63 1207 169)"/><rect x="646" y="300" width="8" height="3" fill="#b8a880" opacity="0.75" transform="rotate(25 646 300)"/><rect x="1250" y="189" width="8" height="3" fill="#a06868" opacity="0.54" transform="rotate(152 1250 189)"/><rect x="1099" y="72" width="6" height="3" fill="#8898b8" opacity="0.61" transform="rotate(44 1099 72)"/><rect x="1137" y="62" width="8" height="3" fill="#708890" opacity="0.87" transform="rotate(128 1137 62)"/><rect x="1232" y="137" width="5" height="3" fill="#708890" opacity="0.87" transform="rotate(49 1232 137)"/><rect x="1184" y="240" width="6" height="3" fill="#2a2a3a" opacity="0.48" transform="rotate(1 1184 240)"/><rect x="669" y="556" width="5" height="3" fill="#c8c0b0" opacity="0.52" transform="rotate(42 669 556)"/><rect x="1136" y="381" width="8" height="3" fill="#b8a880" opacity="0.61" transform="rotate(95 1136 381)"/><rect x="992" y="442" width="4" height="3" fill="#2a2a3a" opacity="0.82" transform="rotate(130 992 442)"/><rect x="1346" y="471" width="7" height="3" fill="#a06868" opacity="0.53" transform="rotate(68 1346 471)"/><rect x="941" y="17" width="7" height="3" fill="#98b098" opacity="0.86" transform="rotate(29 941 17)"/><rect x="1119" y="320" width="7" height="3" fill="#708890" opacity="0.80" transform="rotate(29 1119 320)"/><rect x="610" y="247" width="4" height="3" fill="#98b098" opacity="0.74" transform="rotate(70 610 247)"/><rect x="961" y="349" width="8" height="3" fill="#8898b8" opacity="0.90" transform="rotate(82 961 349)"/><rect x="841" y="315" width="5" height="3" fill="#383850" opacity="0.47" transform="rotate(80 841 315)"/><rect x="935" y="504" width="5" height="3" fill="#8898b8" opacity="0.60" transform="rotate(94 935 504)"/><rect x="1116" y="309" width="6" height="3" fill="#8898b8" opacity="0.69" transform="rotate(69 1116 309)"/><rect x="840" y="288" width="7" height="3" fill="#b8a880" opacity="0.65" transform="rotate(117 840 288)"/><rect x="723" y="323" width="5" height="3" fill="#c8c0b0" opacity="0.52" transform="rotate(127 723 323)"/><rect x="1386" y="484" width="9" height="3" fill="#2a2a3a" opacity="0.46" transform="rotate(71 1386 484)"/><rect x="961" y="309" width="5" height="3" fill="#98b098" opacity="0.68" transform="rotate(132 961 309)"/><rect x="931" y="435" width="7" height="3" fill="#708890" opacity="0.85" transform="rotate(92 931 435)"/><rect x="861" y="209" width="9" height="3" fill="#c8c0b0" opacity="0.77" transform="rotate(172 861 209)"/><rect x="1096" y="139" width="6" height="3" fill="#b8a880" opacity="0.47" transform="rotate(157 1096 139)"/><rect x="835" y="426" width="7" height="3" fill="#708890" opacity="0.87" transform="rotate(171 835 426)"/><rect x="1069" y="358" width="9" height="3" fill="#98b098" opacity="0.58" transform="rotate(145 1069 358)"/><rect x="1093" y="57" width="7" height="2" fill="#8898b8" opacity="0.53" transform="rotate(33 1093 57)"/><rect x="1099" y="420" width="4" height="3" fill="#98b098" opacity="0.73" transform="rotate(132 1099 420)"/><rect x="575" y="252" width="5" height="3" fill="#8898b8" opacity="0.49" transform="rotate(126 575 252)"/><rect x="1159" y="211" width="9" height="2" fill="#a06868" opacity="0.79" transform="rotate(29 1159 211)"/><rect x="986" y="177" width="4" height="3" fill="#98b098" opacity="0.70" transform="rotate(175 986 177)"/><rect x="1399" y="429" width="8" height="3" fill="#b89878" opacity="0.66" transform="rotate(90 1399 429)"/><rect x="1226" y="294" width="7" height="3" fill="#c0c0c8" opacity="0.57" transform="rotate(106 1226 294)"/><rect x="639" y="633" width="8" height="3" fill="#2a2a3a" opacity="0.88" transform="rotate(30 639 633)"/><rect x="727" y="563" width="9" height="3" fill="#b89878" opacity="0.87" transform="rotate(15 727 563)"/><rect x="1246" y="237" width="6" height="2" fill="#c8c0b0" opacity="0.72" transform="rotate(117 1246 237)"/><rect x="650" y="358" width="4" height="3" fill="#8898b8" opacity="0.51" transform="rotate(94 650 358)"/><rect x="840" y="316" width="9" height="4" fill="#708890" opacity="0.57" transform="rotate(35 840 316)"/><rect x="969" y="392" width="8" height="3" fill="#8898b8" opacity="0.81" transform="rotate(96 969 392)"/><rect x="772" y="237" width="5" height="3" fill="#c0c0c8" opacity="0.86" transform="rotate(23 772 237)"/><rect x="633" y="502" width="8" height="3" fill="#b89878" opacity="0.56" transform="rotate(67 633 502)"/><rect x="800" y="285" width="6" height="3" fill="#98b098" opacity="0.58" transform="rotate(38 800 285)"/><rect x="638" y="307" width="5" height="3" fill="#b8a880" opacity="0.49" transform="rotate(139 638 307)"/><rect x="620" y="513" width="8" height="3" fill="#c0c0c8" opacity="0.72" transform="rotate(102 620 513)"/><rect x="718" y="264" width="8" height="3" fill="#98b098" opacity="0.50" transform="rotate(72 718 264)"/><rect x="821" y="68" width="9" height="3" fill="#c8c0b0" opacity="0.55" transform="rotate(107 821 68)"/><rect x="1290" y="369" width="9" height="2" fill="#98b098" opacity="0.49" transform="rotate(86 1290 369)"/><rect x="1399" y="414" width="4" height="3" fill="#708890" opacity="0.66" transform="rotate(79 1399 414)"/><rect x="1008" y="91" width="7" height="3" fill="#c8c0b0" opacity="0.80" transform="rotate(38 1008 91)"/><rect x="1386" y="394" width="5" height="3" fill="#b89878" opacity="0.49" transform="rotate(173 1386 394)"/><rect x="1156" y="271" width="4" height="3" fill="#c0c0c8" opacity="0.67" transform="rotate(173 1156 271)"/><rect x="689" y="127" width="7" height="3" fill="#8898b8" opacity="0.81" transform="rotate(24 689 127)"/><rect x="1102" y="205" width="7" height="3" fill="#383850" opacity="0.87" transform="rotate(113 1102 205)"/><rect x="811" y="264" width="6" height="3" fill="#2a2a3a" opacity="0.49" transform="rotate(51 811 264)"/><rect x="952" y="253" width="6" height="3" fill="#a06868" opacity="0.67" transform="rotate(12 952 253)"/><rect x="952" y="3" width="7" height="3" fill="#2a2a3a" opacity="0.85" transform="rotate(132 952 3)"/><rect x="976" y="497" width="6" height="3" fill="#c0c0c8" opacity="0.82" transform="rotate(63 976 497)"/><rect x="751" y="21" width="6" height="3" fill="#383850" opacity="0.86" transform="rotate(7 751 21)"/><rect x="1085" y="479" width="8" height="3" fill="#c8c0b0" opacity="0.82" transform="rotate(165 1085 479)"/><rect x="1271" y="242" width="7" height="3" fill="#c8c0b0" opacity="0.59" transform="rotate(11 1271 242)"/><rect x="826" y="471" width="4" height="2" fill="#708890" opacity="0.67" transform="rotate(111 826 471)"/><rect x="703" y="217" width="7" height="3" fill="#c0c0c8" opacity="0.68" transform="rotate(149 703 217)"/><rect x="937" y="287" width="8" height="3" fill="#98b098" opacity="0.89" transform="rotate(145 937 287)"/><rect x="1259" y="391" width="8" height="3" fill="#c0c0c8" opacity="0.78" transform="rotate(162 1259 391)"/><rect x="1043" y="387" width="8" height="3" fill="#b89878" opacity="0.58" transform="rotate(16 1043 387)"/><rect x="645" y="202" width="9" height="3" fill="#98b098" opacity="0.83" transform="rotate(176 645 202)"/><rect x="893" y="342" width="8" height="3" fill="#8898b8" opacity="0.57" transform="rotate(172 893 342)"/><rect x="1201" y="377" width="6" height="2" fill="#2a2a3a" opacity="0.82" transform="rotate(16 1201 377)"/><rect x="1227" y="353" width="8" height="2" fill="#c8c0b0" opacity="0.78" transform="rotate(157 1227 353)"/><rect x="853" y="220" width="5" height="2" fill="#c8c0b0" opacity="0.86" transform="rotate(116 853 220)"/><rect x="1260" y="84" width="7" height="3" fill="#c8c0b0" opacity="0.83" transform="rotate(152 1260 84)"/><rect x="829" y="140" width="9" height="4" fill="#b8a880" opacity="0.74" transform="rotate(3 829 140)"/><rect x="1165" y="151" width="6" height="2" fill="#98b098" opacity="0.90" transform="rotate(126 1165 151)"/><rect x="877" y="348" width="4" height="3" fill="#2a2a3a" opacity="0.74" transform="rotate(95 877 348)"/><rect x="1141" y="140" width="5" height="3" fill="#2a2a3a" opacity="0.73" transform="rotate(151 1141 140)"/><rect x="1013" y="567" width="6" height="3" fill="#a06868" opacity="0.56" transform="rotate(130 1013 567)"/><rect x="1181" y="192" width="6" height="2" fill="#b89878" opacity="0.55" transform="rotate(104 1181 192)"/><rect x="1010" y="374" width="6" height="2" fill="#98b098" opacity="0.46" transform="rotate(160 1010 374)"/><rect x="983" y="18" width="6" height="3" fill="#b8a880" opacity="0.73" transform="rotate(1 983 18)"/><rect x="1363" y="271" width="4" height="3" fill="#8898b8" opacity="0.65" transform="rotate(60 1363 271)"/><rect x="1009" y="146" width="5" height="4" fill="#b8a880" opacity="0.48" transform="rotate(129 1009 146)"/><rect x="1360" y="498" width="6" height="2" fill="#c0c0c8" opacity="0.90" transform="rotate(50 1360 498)"/><rect x="935" y="137" width="9" height="3" fill="#b89878" opacity="0.90" transform="rotate(133 935 137)"/><rect x="866" y="493" width="4" height="3" fill="#b89878" opacity="0.63" transform="rotate(127 866 493)"/><rect x="821" y="31" width="6" height="2" fill="#2a2a3a" opacity="0.51" transform="rotate(174 821 31)"/><rect x="1189" y="643" width="8" height="3" fill="#c8c0b0" opacity="0.73" transform="rotate(73 1189 643)"/><rect x="967" y="528" width="8" height="3" fill="#8898b8" opacity="0.70" transform="rotate(96 967 528)"/><rect x="1247" y="522" width="7" height="3" fill="#b8a880" opacity="0.80" transform="rotate(56 1247 522)"/><rect x="775" y="14" width="8" height="3" fill="#b8a880" opacity="0.71" transform="rotate(128 775 14)"/><rect x="831" y="288" width="6" height="3" fill="#98b098" opacity="0.85" transform="rotate(57 831 288)"/><rect x="1080" y="193" width="6" height="3" fill="#a06868" opacity="0.83" transform="rotate(178 1080 193)"/><rect x="1264" y="644" width="8" height="2" fill="#2a2a3a" opacity="0.79" transform="rotate(73 1264 644)"/><rect x="1118" y="63" width="8" height="2" fill="#b8a880" opacity="0.88" transform="rotate(37 1118 63)"/><rect x="889" y="419" width="6" height="2" fill="#b8a880" opacity="0.73" transform="rotate(9 889 419)"/><rect x="619" y="271" width="9" height="2" fill="#b8a880" opacity="0.81" transform="rotate(42 619 271)"/><rect x="986" y="56" width="8" height="3" fill="#8898b8" opacity="0.70" transform="rotate(157 986 56)"/><rect x="707" y="411" width="5" height="3" fill="#c8c0b0" opacity="0.79" transform="rotate(101 707 411)"/><rect x="796" y="646" width="8" height="3" fill="#98b098" opacity="0.50" transform="rotate(177 796 646)"/><rect x="737" y="599" width="6" height="3" fill="#8898b8" opacity="0.73" transform="rotate(111 737 599)"/><rect x="1233" y="392" width="6" height="3" fill="#b8a880" opacity="0.48" transform="rotate(160 1233 392)"/><rect x="1127" y="396" width="9" height="3" fill="#b89878" opacity="0.49" transform="rotate(46 1127 396)"/><rect x="798" y="104" width="8" height="3" fill="#b8a880" opacity="0.52" transform="rotate(123 798 104)"/><rect x="1331" y="626" width="8" height="3" fill="#383850" opacity="0.73" transform="rotate(22 1331 626)"/><rect x="1052" y="257" width="5" height="3" fill="#b8a880" opacity="0.49" transform="rotate(41 1052 257)"/><rect x="1240" y="653" width="7" height="3" fill="#383850" opacity="0.47" transform="rotate(37 1240 653)"/><rect x="1214" y="527" width="8" height="3" fill="#2a2a3a" opacity="0.48" transform="rotate(8 1214 527)"/><rect x="902" y="5" width="5" height="3" fill="#383850" opacity="0.54" transform="rotate(137 902 5)"/><rect x="1233" y="636" width="8" height="3" fill="#b8a880" opacity="0.85" transform="rotate(132 1233 636)"/><rect x="1324" y="641" width="8" height="3" fill="#c8c0b0" opacity="0.89" transform="rotate(76 1324 641)"/><rect x="898" y="148" width="7" height="3" fill="#2a2a3a" opacity="0.87" transform="rotate(53 898 148)"/><rect x="793" y="4" width="9" height="3" fill="#b89878" opacity="0.50" transform="rotate(153 793 4)"/><rect x="1089" y="83" width="8" height="2" fill="#8898b8" opacity="0.84" transform="rotate(124 1089 83)"/><rect x="1382" y="363" width="8" height="3" fill="#383850" opacity="0.69" transform="rotate(14 1382 363)"/><rect x="939" y="343" width="7" height="3" fill="#c0c0c8" opacity="0.89" transform="rotate(150 939 343)"/><rect x="971" y="123" width="8" height="3" fill="#b8a880" opacity="0.73" transform="rotate(130 971 123)"/><rect x="750" y="106" width="9" height="3" fill="#b89878" opacity="0.50" transform="rotate(150 750 106)"/><rect x="860" y="604" width="6" height="3" fill="#b8a880" opacity="0.73" transform="rotate(152 860 604)"/><rect x="614" y="405" width="8" height="2" fill="#b89878" opacity="0.59" transform="rotate(52 614 405)"/><rect x="807" y="554" width="8" height="2" fill="#a06868" opacity="0.46" transform="rotate(29 807 554)"/><rect x="1122" y="311" width="5" height="3" fill="#a06868" opacity="0.56" transform="rotate(21 1122 311)"/><rect x="1020" y="46" width="6" height="3" fill="#383850" opacity="0.66" transform="rotate(83 1020 46)"/><rect x="923" y="257" width="6" height="2" fill="#708890" opacity="0.72" transform="rotate(36 923 257)"/><rect x="1022" y="257" width="8" height="3" fill="#c0c0c8" opacity="0.84" transform="rotate(163 1022 257)"/><rect x="1074" y="385" width="8" height="3" fill="#c8c0b0" opacity="0.88" transform="rotate(5 1074 385)"/><rect x="1336" y="324" width="6" height="4" fill="#c0c0c8" opacity="0.68" transform="rotate(141 1336 324)"/><rect x="1177" y="55" width="6" height="3" fill="#b8a880" opacity="0.69" transform="rotate(86 1177 55)"/><rect x="1182" y="109" width="5" height="3" fill="#708890" opacity="0.83" transform="rotate(93 1182 109)"/><rect x="1293" y="166" width="4" height="2" fill="#c8c0b0" opacity="0.51" transform="rotate(97 1293 166)"/><rect x="817" y="486" width="7" height="3" fill="#c0c0c8" opacity="0.50" transform="rotate(63 817 486)"/><rect x="951" y="251" width="7" height="3" fill="#383850" opacity="0.68" transform="rotate(155 951 251)"/><rect x="778" y="379" width="5" height="3" fill="#c0c0c8" opacity="0.74" transform="rotate(99 778 379)"/><rect x="591" y="244" width="8" height="3" fill="#a06868" opacity="0.60" transform="rotate(48 591 244)"/><rect x="1199" y="404" width="6" height="4" fill="#c0c0c8" opacity="0.48" transform="rotate(121 1199 404)"/><rect x="853" y="126" width="9" height="3" fill="#c8c0b0" opacity="0.64" transform="rotate(57 853 126)"/><rect x="1204" y="599" width="5" height="3" fill="#b8a880" opacity="0.70" transform="rotate(122 1204 599)"/><rect x="971" y="643" width="6" height="3" fill="#2a2a3a" opacity="0.62" transform="rotate(46 971 643)"/><rect x="1285" y="472" width="4" height="3" fill="#98b098" opacity="0.53" transform="rotate(50 1285 472)"/><rect x="907" y="185" width="7" height="3" fill="#383850" opacity="0.79" transform="rotate(115 907 185)"/><rect x="1193" y="258" width="6" height="3" fill="#c8c0b0" opacity="0.86" transform="rotate(37 1193 258)"/><rect x="900" y="86" width="7" height="3" fill="#c8c0b0" opacity="0.81" transform="rotate(32 900 86)"/><rect x="901" y="117" width="6" height="4" fill="#c8c0b0" opacity="0.82" transform="rotate(68 901 117)"/><rect x="881" y="54" width="6" height="3" fill="#c8c0b0" opacity="0.58" transform="rotate(42 881 54)"/><rect x="862" y="324" width="6" height="4" fill="#8898b8" opacity="0.81" transform="rotate(28 862 324)"/><rect x="807" y="309" width="8" height="3" fill="#b89878" opacity="0.56" transform="rotate(49 807 309)"/><rect x="939" y="351" width="6" height="4" fill="#b89878" opacity="0.83" transform="rotate(79 939 351)"/><rect x="870" y="322" width="6" height="3" fill="#c0c0c8" opacity="0.61" transform="rotate(64 870 322)"/><rect x="685" y="201" width="6" height="3" fill="#383850" opacity="0.50" transform="rotate(33 685 201)"/><rect x="1076" y="427" width="9" height="3" fill="#708890" opacity="0.53" transform="rotate(149 1076 427)"/><rect x="1075" y="437" width="9" height="2" fill="#98b098" opacity="0.64" transform="rotate(180 1075 437)"/><rect x="1227" y="482" width="9" height="2" fill="#8898b8" opacity="0.62" transform="rotate(83 1227 482)"/><rect x="1253" y="623" width="8" height="2" fill="#a06868" opacity="0.83" transform="rotate(70 1253 623)"/><rect x="993" y="273" width="8" height="3" fill="#2a2a3a" opacity="0.83" transform="rotate(20 993 273)"/><rect x="837" y="330" width="6" height="3" fill="#383850" opacity="0.50" transform="rotate(69 837 330)"/><rect x="770" y="305" width="8" height="3" fill="#98b098" opacity="0.79" transform="rotate(48 770 305)"/><rect x="1207" y="195" width="7" height="2" fill="#b89878" opacity="0.66" transform="rotate(114 1207 195)"/><rect x="949" y="301" width="5" height="3" fill="#b8a880" opacity="0.46" transform="rotate(25 949 301)"/><rect x="1149" y="487" width="6" height="3" fill="#a06868" opacity="0.84" transform="rotate(29 1149 487)"/><rect x="760" y="434" width="8" height="3" fill="#8898b8" opacity="0.87" transform="rotate(85 760 434)"/><rect x="851" y="168" width="8" height="3" fill="#b89878" opacity="0.85" transform="rotate(24 851 168)"/><rect x="1200" y="43" width="4" height="3" fill="#383850" opacity="0.58" transform="rotate(159 1200 43)"/><rect x="938" y="506" width="8" height="3" fill="#b8a880" opacity="0.80" transform="rotate(152 938 506)"/><rect x="749" y="336" width="6" height="3" fill="#98b098" opacity="0.52" transform="rotate(176 749 336)"/><rect x="1001" y="287" width="5" height="3" fill="#a06868" opacity="0.57" transform="rotate(153 1001 287)"/><rect x="968" y="586" width="7" height="3" fill="#c8c0b0" opacity="0.76" transform="rotate(170 968 586)"/><rect x="1065" y="12" width="8" height="3" fill="#8898b8" opacity="0.61" transform="rotate(137 1065 12)"/><rect x="860" y="179" width="7" height="3" fill="#8898b8" opacity="0.67" transform="rotate(130 860 179)"/><rect x="931" y="155" width="8" height="3" fill="#98b098" opacity="0.57" transform="rotate(92 931 155)"/><rect x="867" y="376" width="7" height="3" fill="#383850" opacity="0.63" transform="rotate(86 867 376)"/><rect x="1046" y="342" width="7" height="3" fill="#b89878" opacity="0.90" transform="rotate(68 1046 342)"/><rect x="1383" y="510" width="8" height="2" fill="#708890" opacity="0.85" transform="rotate(146 1383 510)"/><rect x="1198" y="354" width="4" height="3" fill="#c8c0b0" opacity="0.85" transform="rotate(2 1198 354)"/><rect x="985" y="429" width="8" height="3" fill="#a06868" opacity="0.76" transform="rotate(21 985 429)"/><rect x="617" y="333" width="5" height="3" fill="#2a2a3a" opacity="0.53" transform="rotate(176 617 333)"/><rect x="756" y="361" width="6" height="2" fill="#b8a880" opacity="0.70" transform="rotate(164 756 361)"/><rect x="783" y="88" width="8" height="3" fill="#c0c0c8" opacity="0.66" transform="rotate(56 783 88)"/><rect x="850" y="312" width="5" height="2" fill="#c8c0b0" opacity="0.62" transform="rotate(152 850 312)"/><rect x="741" y="501" width="7" height="3" fill="#708890" opacity="0.62" transform="rotate(147 741 501)"/><rect x="1049" y="142" width="4" height="3" fill="#b89878" opacity="0.81" transform="rotate(68 1049 142)"/><rect x="1017" y="299" width="7" height="2" fill="#c0c0c8" opacity="0.72" transform="rotate(61 1017 299)"/><rect x="942" y="86" width="7" height="3" fill="#8898b8" opacity="0.66" transform="rotate(179 942 86)"/><rect x="1018" y="252" width="8" height="3" fill="#8898b8" opacity="0.54" transform="rotate(175 1018 252)"/><rect x="935" y="186" width="8" height="3" fill="#a06868" opacity="0.74" transform="rotate(75 935 186)"/><rect x="1107" y="561" width="8" height="3" fill="#b89878" opacity="0.80" transform="rotate(135 1107 561)"/><rect x="973" y="86" width="6" height="3" fill="#a06868" opacity="0.68" transform="rotate(91 973 86)"/><rect x="1019" y="79" width="7" height="3" fill="#2a2a3a" opacity="0.50" transform="rotate(30 1019 79)"/><rect x="700" y="382" width="7" height="3" fill="#b89878" opacity="0.77" transform="rotate(161 700 382)"/><rect x="1008" y="345" width="6" height="3" fill="#a06868" opacity="0.68" transform="rotate(112 1008 345)"/><rect x="925" y="80" width="7" height="3" fill="#8898b8" opacity="0.48" transform="rotate(44 925 80)"/><rect x="616" y="191" width="5" height="2" fill="#a06868" opacity="0.63" transform="rotate(169 616 191)"/><rect x="555" y="600" width="8" height="3" fill="#708890" opacity="0.53" transform="rotate(21 555 600)"/><rect x="816" y="31" width="5" height="3" fill="#8898b8" opacity="0.87" transform="rotate(139 816 31)"/><rect x="696" y="109" width="5" height="3" fill="#a06868" opacity="0.85" transform="rotate(58 696 109)"/><rect x="769" y="385" width="8" height="3" fill="#98b098" opacity="0.87" transform="rotate(140 769 385)"/><rect x="947" y="486" width="9" height="3" fill="#8898b8" opacity="0.78" transform="rotate(34 947 486)"/><rect x="954" y="626" width="8" height="3" fill="#2a2a3a" opacity="0.70" transform="rotate(165 954 626)"/><rect x="535" y="394" width="8" height="4" fill="#b8a880" opacity="0.83" transform="rotate(91 535 394)"/><rect x="875" y="267" width="5" height="3" fill="#c8c0b0" opacity="0.49" transform="rotate(178 875 267)"/><rect x="623" y="220" width="5" height="3" fill="#8898b8" opacity="0.61" transform="rotate(7 623 220)"/><rect x="878" y="87" width="9" height="3" fill="#2a2a3a" opacity="0.73" transform="rotate(42 878 87)"/><rect x="1034" y="224" width="4" height="3" fill="#a06868" opacity="0.73" transform="rotate(41 1034 224)"/><rect x="837" y="345" width="7" height="3" fill="#2a2a3a" opacity="0.86" transform="rotate(14 837 345)"/><rect x="1153" y="97" width="7" height="3" fill="#708890" opacity="0.59" transform="rotate(69 1153 97)"/><rect x="997" y="152" width="7" height="3" fill="#383850" opacity="0.55" transform="rotate(159 997 152)"/><rect x="1085" y="94" width="5" height="3" fill="#a06868" opacity="0.83" transform="rotate(128 1085 94)"/><rect x="956" y="237" width="6" height="3" fill="#383850" opacity="0.72" transform="rotate(33 956 237)"/><rect x="633" y="430" width="7" height="4" fill="#c0c0c8" opacity="0.54" transform="rotate(36 633 430)"/><rect x="1230" y="556" width="4" height="3" fill="#8898b8" opacity="0.73" transform="rotate(24 1230 556)"/><rect x="894" y="534" width="6" height="3" fill="#2a2a3a" opacity="0.77" transform="rotate(64 894 534)"/><rect x="890" y="137" width="7" height="2" fill="#2a2a3a" opacity="0.52" transform="rotate(44 890 137)"/><rect x="848" y="384" width="5" height="3" fill="#2a2a3a" opacity="0.67" transform="rotate(176 848 384)"/><rect x="1051" y="403" width="7" height="3" fill="#c0c0c8" opacity="0.46" transform="rotate(84 1051 403)"/><rect x="1220" y="589" width="7" height="3" fill="#c8c0b0" opacity="0.71" transform="rotate(70 1220 589)"/><rect x="1035" y="88" width="5" height="3" fill="#c0c0c8" opacity="0.83" transform="rotate(50 1035 88)"/><rect x="765" y="270" width="5" height="3" fill="#a06868" opacity="0.46" transform="rotate(19 765 270)"/><rect x="1197" y="118" width="8" height="3" fill="#c8c0b0" opacity="0.89" transform="rotate(7 1197 118)"/><rect x="930" y="450" width="7" height="2" fill="#383850" opacity="0.83" transform="rotate(12 930 450)"/><rect x="1240" y="138" width="5" height="3" fill="#b89878" opacity="0.54" transform="rotate(8 1240 138)"/><rect x="1309" y="327" width="8" height="3" fill="#c0c0c8" opacity="0.61" transform="rotate(81 1309 327)"/><rect x="784" y="650" width="5" height="3" fill="#c0c0c8" opacity="0.86" transform="rotate(111 784 650)"/><rect x="1168" y="309" width="7" height="2" fill="#8898b8" opacity="0.67" transform="rotate(168 1168 309)"/><rect x="980" y="23" width="6" height="2" fill="#383850" opacity="0.45" transform="rotate(55 980 23)"/><rect x="667" y="252" width="9" height="3" fill="#c0c0c8" opacity="0.50" transform="rotate(78 667 252)"/><rect x="1131" y="344" width="5" height="3" fill="#98b098" opacity="0.80" transform="rotate(102 1131 344)"/><rect x="1276" y="655" width="8" height="4" fill="#c0c0c8" opacity="0.57" transform="rotate(37 1276 655)"/><rect x="1088" y="365" width="7" height="3" fill="#b89878" opacity="0.68" transform="rotate(170 1088 365)"/><rect x="913" y="139" width="8" height="2" fill="#b8a880" opacity="0.87" transform="rotate(37 913 139)"/><rect x="1001" y="363" width="9" height="3" fill="#383850" opacity="0.70" transform="rotate(165 1001 363)"/><rect x="1213" y="213" width="9" height="3" fill="#b8a880" opacity="0.51" transform="rotate(54 1213 213)"/><rect x="1087" y="276" width="6" height="3" fill="#708890" opacity="0.55" transform="rotate(85 1087 276)"/><rect x="1101" y="179" width="8" height="4" fill="#98b098" opacity="0.74" transform="rotate(99 1101 179)"/><rect x="947" y="124" width="7" height="3" fill="#a06868" opacity="0.89" transform="rotate(173 947 124)"/><rect x="961" y="140" width="5" height="3" fill="#b89878" opacity="0.58" transform="rotate(178 961 140)"/><rect x="1141" y="598" width="7" height="3" fill="#b8a880" opacity="0.72" transform="rotate(145 1141 598)"/><rect x="554" y="453" width="9" height="3" fill="#2a2a3a" opacity="0.74" transform="rotate(58 554 453)"/><rect x="831" y="426" width="9" height="3" fill="#b8a880" opacity="0.77" transform="rotate(129 831 426)"/><rect x="834" y="480" width="6" height="2" fill="#b89878" opacity="0.89" transform="rotate(43 834 480)"/><rect x="1006" y="43" width="5" height="2" fill="#a06868" opacity="0.78" transform="rotate(147 1006 43)"/><rect x="1064" y="17" width="4" height="2" fill="#2a2a3a" opacity="0.81" transform="rotate(58 1064 17)"/><rect x="1090" y="506" width="4" height="2" fill="#a06868" opacity="0.61" transform="rotate(145 1090 506)"/><rect x="1135" y="257" width="7" height="3" fill="#b8a880" opacity="0.61" transform="rotate(159 1135 257)"/><rect x="1198" y="134" width="6" height="3" fill="#c8c0b0" opacity="0.83" transform="rotate(163 1198 134)"/><rect x="1107" y="550" width="7" height="3" fill="#2a2a3a" opacity="0.85" transform="rotate(152 1107 550)"/><rect x="1263" y="145" width="8" height="3" fill="#2a2a3a" opacity="0.85" transform="rotate(176 1263 145)"/><rect x="1015" y="27" width="5" height="3" fill="#a06868" opacity="0.53" transform="rotate(135 1015 27)"/><rect x="1383" y="435" width="6" height="3" fill="#708890" opacity="0.70" transform="rotate(118 1383 435)"/><rect x="901" y="119" width="6" height="3" fill="#c0c0c8" opacity="0.61" transform="rotate(4 901 119)"/><rect x="881" y="553" width="6" height="2" fill="#708890" opacity="0.89" transform="rotate(159 881 553)"/><rect x="998" y="6" width="7" height="3" fill="#c0c0c8" opacity="0.51" transform="rotate(99 998 6)"/><rect x="913" y="639" width="6" height="2" fill="#c0c0c8" opacity="0.67" transform="rotate(43 913 639)"/><rect x="1101" y="348" width="5" height="3" fill="#c0c0c8" opacity="0.65" transform="rotate(16 1101 348)"/><rect x="1213" y="321" width="6" height="3" fill="#98b098" opacity="0.90" transform="rotate(103 1213 321)"/><rect x="1042" y="115" width="8" height="2" fill="#2a2a3a" opacity="0.51" transform="rotate(161 1042 115)"/><rect x="1068" y="427" width="9" height="3" fill="#c8c0b0" opacity="0.67" transform="rotate(36 1068 427)"/><rect x="1013" y="191" width="6" height="3" fill="#2a2a3a" opacity="0.47" transform="rotate(144 1013 191)"/><rect x="1009" y="316" width="8" height="3" fill="#b8a880" opacity="0.45" transform="rotate(48 1009 316)"/><rect x="873" y="46" width="5" height="3" fill="#c8c0b0" opacity="0.84" transform="rotate(20 873 46)"/><rect x="1230" y="195" width="8" height="2" fill="#b89878" opacity="0.81" transform="rotate(68 1230 195)"/><rect x="1209" y="114" width="8" height="2" fill="#2a2a3a" opacity="0.51" transform="rotate(19 1209 114)"/><rect x="1124" y="505" width="5" height="3" fill="#708890" opacity="0.49" transform="rotate(31 1124 505)"/><rect x="757" y="76" width="8" height="3" fill="#b89878" opacity="0.62" transform="rotate(86 757 76)"/><rect x="680" y="334" width="8" height="3" fill="#a06868" opacity="0.56" transform="rotate(10 680 334)"/><rect x="1192" y="204" width="7" height="3" fill="#2a2a3a" opacity="0.79" transform="rotate(54 1192 204)"/><rect x="900" y="362" width="8" height="3" fill="#b89878" opacity="0.75" transform="rotate(161 900 362)"/><rect x="1358" y="645" width="6" height="2" fill="#c8c0b0" opacity="0.69" transform="rotate(93 1358 645)"/><rect x="822" y="356" width="5" height="2" fill="#8898b8" opacity="0.72" transform="rotate(43 822 356)"/><rect x="822" y="196" width="7" height="3" fill="#b89878" opacity="0.86" transform="rotate(36 822 196)"/><rect x="1036" y="2" width="7" height="2" fill="#c0c0c8" opacity="0.75" transform="rotate(6 1036 2)"/><rect x="1042" y="490" width="9" height="2" fill="#b89878" opacity="0.76" transform="rotate(133 1042 490)"/><rect x="1042" y="216" width="4" height="3" fill="#98b098" opacity="0.68" transform="rotate(59 1042 216)"/><rect x="600" y="363" width="8" height="3" fill="#2a2a3a" opacity="0.60" transform="rotate(14 600 363)"/><rect x="1224" y="471" width="6" height="3" fill="#2a2a3a" opacity="0.87" transform="rotate(138 1224 471)"/><rect x="937" y="147" width="7" height="3" fill="#708890" opacity="0.70" transform="rotate(93 937 147)"/><rect x="922" y="442" width="5" height="4" fill="#b89878" opacity="0.61" transform="rotate(68 922 442)"/><rect x="1232" y="651" width="4" height="3" fill="#383850" opacity="0.70" transform="rotate(171 1232 651)"/><rect x="974" y="390" width="6" height="3" fill="#b89878" opacity="0.79" transform="rotate(82 974 390)"/><rect x="912" y="465" width="8" height="2" fill="#b89878" opacity="0.75" transform="rotate(51 912 465)"/><rect x="808" y="274" width="6" height="3" fill="#a06868" opacity="0.70" transform="rotate(73 808 274)"/><rect x="1028" y="311" width="7" height="2" fill="#98b098" opacity="0.84" transform="rotate(101 1028 311)"/><rect x="809" y="532" width="8" height="3" fill="#b8a880" opacity="0.66" transform="rotate(173 809 532)"/><rect x="596" y="223" width="8" height="3" fill="#383850" opacity="0.60" transform="rotate(78 596 223)"/></g><g opacity="0.55">
<ellipse cx="623" cy="548" rx="16" ry="20" fill="#58566a"/><path d="M596 572 Q623 560 650 572 L656 700 L590 700Z" fill="#1e1d2a"/><path d="M580 685 L718 610" stroke="#7a6a68" stroke-width="8"/>
<ellipse cx="978" cy="560" rx="22" ry="26" fill="#8a7c80"/><path d="M955 585 Q978 575 1001 585 L1008 720 L948 720Z" fill="#5a4a60"/><path d="M998 590 L1022 470" stroke="#8a7a88" stroke-width="7"/>
<ellipse cx="1165" cy="552" rx="16" ry="20" fill="#7a7a90"/><path d="M1142 575 Q1165 565 1188 575 L1194 700 L1136 700Z" fill="#33334a"/><path d="M1142 660 L1258 590" stroke="#8a7a68" stroke-width="6"/>
</g><g opacity="0.8"><path d="M1105 740 Q1109 656 1106 571" fill="none" stroke="#161526" stroke-width="5" stroke-linecap="round"/><path d="M1101 574 Q1097 563 1103 558 Q1108 556 1112 561 Q1114 569 1110 574Z" fill="#161526"/><path d="M951 751 Q952 669 935 586" fill="none" stroke="#161526" stroke-width="5" stroke-linecap="round"/><path d="M930 589 Q926 578 932 573 Q937 571 941 576 Q943 584 939 589Z" fill="#161526"/><path d="M897 725 Q882 659 871 593" fill="none" stroke="#161526" stroke-width="5" stroke-linecap="round"/><path d="M866 596 Q862 585 868 580 Q873 578 877 583 Q879 591 875 596Z" fill="#161526"/><path d="M1078 725 Q1096 673 1093 620" fill="none" stroke="#161526" stroke-width="5" stroke-linecap="round"/><path d="M1088 623 Q1084 612 1090 607 Q1095 605 1099 610 Q1101 618 1097 623Z" fill="#161526"/><path d="M692 718 Q673 689 665 661" fill="none" stroke="#161526" stroke-width="5" stroke-linecap="round"/><path d="M660 664 Q656 653 662 648 Q667 646 671 651 Q673 659 669 664Z" fill="#161526"/><path d="M975 751 Q955 702 941 653" fill="none" stroke="#161526" stroke-width="5" stroke-linecap="round"/><path d="M936 656 Q932 645 938 640 Q943 638 947 643 Q949 651 945 656Z" fill="#161526"/><path d="M1275 722 Q1275 680 1252 638" fill="none" stroke="#161526" stroke-width="5" stroke-linecap="round"/><path d="M1247 641 Q1243 630 1249 625 Q1254 623 1258 628 Q1260 636 1256 641Z" fill="#161526"/><path d="M1387 724 Q1387 650 1379 576" fill="none" stroke="#161526" stroke-width="5" stroke-linecap="round"/><path d="M1374 579 Q1370 568 1376 563 Q1381 561 1385 566 Q1387 574 1383 579Z" fill="#161526"/><path d="M1254 752 Q1254 677 1247 603" fill="none" stroke="#161526" stroke-width="5" stroke-linecap="round"/><path d="M1242 606 Q1238 595 1244 590 Q1249 588 1253 593 Q1255 601 1251 606Z" fill="#161526"/><path d="M851 740 Q845 686 860 632" fill="none" stroke="#161526" stroke-width="5" stroke-linecap="round"/><path d="M855 635 Q851 624 857 619 Q862 617 866 622 Q868 630 864 635Z" fill="#161526"/><path d="M989 731 Q985 658 993 585" fill="none" stroke="#161526" stroke-width="5" stroke-linecap="round"/><path d="M988 588 Q984 577 990 572 Q995 570 999 575 Q1001 583 997 588Z" fill="#161526"/><path d="M622 713 Q606 678 611 644" fill="none" stroke="#161526" stroke-width="5" stroke-linecap="round"/><path d="M606 647 Q602 636 608 631 Q613 629 617 634 Q619 642 615 647Z" fill="#161526"/><path d="M815 731 Q806 692 808 652" fill="none" stroke="#161526" stroke-width="5" stroke-linecap="round"/><path d="M803 655 Q799 644 805 639 Q810 637 814 642 Q816 650 812 655Z" fill="#161526"/><path d="M674 715 Q684 655 676 595" fill="none" stroke="#161526" stroke-width="5" stroke-linecap="round"/><path d="M671 598 Q667 587 673 582 Q678 580 682 585 Q684 593 680 598Z" fill="#161526"/><path d="M951 707 Q955 655 980 602" fill="none" stroke="#161526" stroke-width="5" stroke-linecap="round"/><path d="M975 605 Q971 594 977 589 Q982 587 986 592 Q988 600 984 605Z" fill="#161526"/><path d="M731 756 Q727 701 734 647" fill="none" stroke="#161526" stroke-width="5" stroke-linecap="round"/><path d="M729 650 Q725 639 731 634 Q736 632 740 637 Q742 645 738 650Z" fill="#161526"/><path d="M702 716 Q701 654 723 591" fill="none" stroke="#161526" stroke-width="5" stroke-linecap="round"/><path d="M718 594 Q714 583 720 578 Q725 576 729 581 Q731 589 727 594Z" fill="#161526"/><path d="M812 715 Q797 664 795 613" fill="none" stroke="#161526" stroke-width="5" stroke-linecap="round"/><path d="M790 616 Q786 605 792 600 Q797 598 801 603 Q803 611 799 616Z" fill="#161526"/><path d="M939 716 Q935 646 924 577" fill="none" stroke="#161526" stroke-width="5" stroke-linecap="round"/><path d="M919 580 Q915 569 921 564 Q926 562 930 567 Q932 575 928 580Z" fill="#161526"/><path d="M885 709 Q884 650 863 591" fill="none" stroke="#161526" stroke-width="5" stroke-linecap="round"/><path d="M858 594 Q854 583 860 578 Q865 576 869 581 Q871 589 867 594Z" fill="#161526"/><path d="M1257 740 Q1260 687 1261 634" fill="none" stroke="#161526" stroke-width="5" stroke-linecap="round"/><path d="M1256 637 Q1252 626 1258 621 Q1263 619 1267 624 Q1269 632 1265 637Z" fill="#161526"/><path d="M1169 744 Q1186 670 1185 596" fill="none" stroke="#161526" stroke-width="5" stroke-linecap="round"/><path d="M1180 599 Q1176 588 1182 583 Q1187 581 1191 586 Q1193 594 1189 599Z" fill="#161526"/><path d="M1023 758 Q1041 690 1044 623" fill="none" stroke="#161526" stroke-width="5" stroke-linecap="round"/><path d="M1039 626 Q1035 615 1041 610 Q1046 608 1050 613 Q1052 621 1048 626Z" fill="#161526"/><path d="M1141 703 Q1140 639 1141 574" fill="none" stroke="#161526" stroke-width="5" stroke-linecap="round"/><path d="M1136 577 Q1132 566 1138 561 Q1143 559 1147 564 Q1149 572 1145 577Z" fill="#161526"/><path d="M731 749 Q751 699 750 650" fill="none" stroke="#161526" stroke-width="5" stroke-linecap="round"/><path d="M745 653 Q741 642 747 637 Q752 635 756 640 Q758 648 754 653Z" fill="#161526"/><path d="M724 708 Q735 681 759 653" fill="none" stroke="#161526" stroke-width="5" stroke-linecap="round"/><path d="M754 656 Q750 645 756 640 Q761 638 765 643 Q767 651 763 656Z" fill="#161526"/><path d="M1070 707 Q1056 658 1066 608" fill="none" stroke="#161526" stroke-width="5" stroke-linecap="round"/><path d="M1061 611 Q1057 600 1063 595 Q1068 593 1072 598 Q1074 606 1070 611Z" fill="#161526"/><path d="M809 750 Q812 673 820 596" fill="none" stroke="#161526" stroke-width="5" stroke-linecap="round"/><path d="M815 599 Q811 588 817 583 Q822 581 826 586 Q828 594 824 599Z" fill="#161526"/><path d="M611 717 Q617 689 614 662" fill="none" stroke="#161526" stroke-width="5" stroke-linecap="round"/><path d="M609 665 Q605 654 611 649 Q616 647 620 652 Q622 660 618 665Z" fill="#161526"/><path d="M1183 733 Q1183 666 1189 598" fill="none" stroke="#161526" stroke-width="5" stroke-linecap="round"/><path d="M1184 601 Q1180 590 1186 585 Q1191 583 1195 588 Q1197 596 1193 601Z" fill="#161526"/><path d="M668 742 Q667 695 672 648" fill="none" stroke="#161526" stroke-width="5" stroke-linecap="round"/><path d="M667 651 Q663 640 669 635 Q674 633 678 638 Q680 646 676 651Z" fill="#161526"/><path d="M964 716 Q956 644 932 573" fill="none" stroke="#161526" stroke-width="5" stroke-linecap="round"/><path d="M927 576 Q923 565 929 560 Q934 558 938 563 Q940 571 936 576Z" fill="#161526"/></g><g filter="url(#blurC)" opacity="0.75"><ellipse cx="-50" cy="632" rx="31" ry="37" fill="#0f0f1a"/><path d="M-96 1141 Q-93 660 -50 654 Q-7 660 -4 1141Z" fill="#0f0f1a"/><ellipse cx="23" cy="644" rx="29" ry="35" fill="#111120"/><path d="M-22 1141 Q-19 671 23 665 Q64 671 67 1141Z" fill="#111120"/><ellipse cx="93" cy="638" rx="26" ry="31" fill="#10101c"/><path d="M54 1141 Q57 662 93 656 Q129 662 131 1141Z" fill="#10101c"/><ellipse cx="155" cy="638" rx="23" ry="27" fill="#111120"/><path d="M121 1141 Q123 659 155 654 Q187 659 189 1141Z" fill="#111120"/><ellipse cx="200" cy="642" rx="29" ry="35" fill="#10101c"/><path d="M156 1141 Q159 668 200 662 Q240 668 243 1141Z" fill="#10101c"/><ellipse cx="258" cy="642" rx="26" ry="31" fill="#10101c"/><path d="M219 1141 Q221 665 258 660 Q294 665 297 1141Z" fill="#10101c"/><ellipse cx="320" cy="641" rx="31" ry="37" fill="#111120"/><path d="M274 1141 Q277 668 320 662 Q363 668 366 1141Z" fill="#111120"/><ellipse cx="385" cy="648" rx="31" ry="37" fill="#0f0f1a"/><path d="M338 1141 Q341 676 385 670 Q428 676 431 1141Z" fill="#0f0f1a"/><ellipse cx="453" cy="645" rx="30" ry="36" fill="#111120"/><path d="M407 1141 Q410 672 453 666 Q495 672 498 1141Z" fill="#111120"/><ellipse cx="509" cy="644" rx="24" ry="29" fill="#0f0f1a"/><path d="M473 1141 Q476 666 509 661 Q543 666 545 1141Z" fill="#0f0f1a"/><ellipse cx="559" cy="636" rx="29" ry="35" fill="#111120"/><path d="M515 1141 Q518 663 559 657 Q600 663 603 1141Z" fill="#111120"/><ellipse cx="627" cy="634" rx="22" ry="27" fill="#10101c"/><path d="M593 1141 Q596 654 627 649 Q658 654 660 1141Z" fill="#10101c"/><ellipse cx="800" cy="648" rx="26" ry="31" fill="#111120"/><path d="M760 1141 Q763 672 800 666 Q836 672 839 1141Z" fill="#111120"/><ellipse cx="856" cy="647" rx="28" ry="33" fill="#10101c"/><path d="M814 1141 Q817 672 856 667 Q895 672 897 1141Z" fill="#10101c"/><ellipse cx="921" cy="649" rx="28" ry="34" fill="#0f0f1a"/><path d="M879 1141 Q881 674 921 668 Q960 674 963 1141Z" fill="#0f0f1a"/><ellipse cx="1197" cy="640" rx="29" ry="35" fill="#10101c"/><path d="M1153 1141 Q1156 666 1197 661 Q1238 666 1241 1141Z" fill="#10101c"/><ellipse cx="1269" cy="648" rx="27" ry="32" fill="#0f0f1a"/><path d="M1229 1141 Q1232 672 1269 666 Q1307 672 1310 1141Z" fill="#0f0f1a"/><ellipse cx="1386" cy="643" rx="26" ry="31" fill="#0f0f1a"/><path d="M1348 1141 Q1350 666 1386 661 Q1422 666 1425 1141Z" fill="#0f0f1a"/><ellipse cx="1439" cy="636" rx="23" ry="28" fill="#10101c"/><path d="M1404 1141 Q1407 657 1439 652 Q1472 657 1475 1141Z" fill="#10101c"/><ellipse cx="1498" cy="643" rx="28" ry="33" fill="#10101c"/><path d="M1456 1141 Q1459 668 1498 663 Q1537 668 1539 1141Z" fill="#10101c"/><ellipse cx="1558" cy="632" rx="25" ry="30" fill="#10101c"/><path d="M1521 1141 Q1523 655 1558 650 Q1593 655 1596 1141Z" fill="#10101c"/><ellipse cx="1609" cy="631" rx="30" ry="36" fill="#0f0f1a"/><path d="M1563 1141 Q1566 659 1609 653 Q1651 659 1654 1141Z" fill="#0f0f1a"/><ellipse cx="1665" cy="640" rx="26" ry="32" fill="#10101c"/><path d="M1625 1141 Q1628 663 1665 658 Q1702 663 1704 1141Z" fill="#10101c"/><ellipse cx="1716" cy="632" rx="31" ry="37" fill="#111120"/><path d="M1669 1141 Q1672 660 1716 654 Q1759 660 1762 1141Z" fill="#111120"/><ellipse cx="1783" cy="641" rx="22" ry="27" fill="#10101c"/><path d="M1750 1141 Q1752 661 1783 657 Q1815 661 1817 1141Z" fill="#10101c"/><ellipse cx="1829" cy="644" rx="31" ry="37" fill="#0f0f1a"/><path d="M1783 1141 Q1786 672 1829 666 Q1873 672 1876 1141Z" fill="#0f0f1a"/><ellipse cx="1889" cy="647" rx="25" ry="30" fill="#0f0f1a"/><path d="M1851 1141 Q1853 669 1889 664 Q1924 669 1927 1141Z" fill="#0f0f1a"/><ellipse cx="1940" cy="633" rx="25" ry="30" fill="#0f0f1a"/><path d="M1902 1141 Q1905 655 1940 650 Q1975 655 1977 1141Z" fill="#0f0f1a"/><ellipse cx="1989" cy="635" rx="30" ry="36" fill="#0f0f1a"/><path d="M1945 1141 Q1948 662 1989 656 Q2031 662 2033 1141Z" fill="#0f0f1a"/><ellipse cx="2044" cy="634" rx="29" ry="35" fill="#0f0f1a"/><path d="M1999 1141 Q2002 661 2044 655 Q2085 661 2088 1141Z" fill="#0f0f1a"/><ellipse cx="-41" cy="696" rx="30" ry="36" fill="#111120"/><path d="M-87 1141 Q-84 724 -41 718 Q1 724 4 1141Z" fill="#111120"/><ellipse cx="18" cy="682" rx="39" ry="47" fill="#111120"/><path d="M-40 1141 Q-36 717 18 709 Q73 717 77 1141Z" fill="#111120"/><ellipse cx="111" cy="681" rx="39" ry="47" fill="#10101c"/><path d="M52 1141 Q56 717 111 709 Q166 717 170 1141Z" fill="#10101c"/><ellipse cx="203" cy="690" rx="34" ry="41" fill="#10101c"/><path d="M152 1141 Q155 721 203 714 Q251 721 254 1141Z" fill="#10101c"/><ellipse cx="277" cy="686" rx="32" ry="38" fill="#10101c"/><path d="M229 1141 Q232 714 277 708 Q321 714 324 1141Z" fill="#10101c"/><ellipse cx="343" cy="684" rx="36" ry="43" fill="#111120"/><path d="M289 1141 Q293 717 343 709 Q394 717 398 1141Z" fill="#111120"/><ellipse cx="429" cy="692" rx="33" ry="40" fill="#10101c"/><path d="M379 1141 Q382 722 429 715 Q475 722 479 1141Z" fill="#10101c"/><ellipse cx="508" cy="693" rx="32" ry="39" fill="#10101c"/><path d="M460 1141 Q463 722 508 715 Q554 722 557 1141Z" fill="#10101c"/><ellipse cx="578" cy="688" rx="31" ry="37" fill="#0f0f1a"/><path d="M532 1141 Q535 715 578 709 Q621 715 624 1141Z" fill="#0f0f1a"/><ellipse cx="640" cy="701" rx="39" ry="47" fill="#10101c"/><path d="M581 1141 Q585 736 640 728 Q695 736 699 1141Z" fill="#10101c"/><ellipse cx="857" cy="702" rx="35" ry="43" fill="#111120"/><path d="M804 1141 Q807 734 857 726 Q907 734 910 1141Z" fill="#111120"/><ellipse cx="928" cy="684" rx="31" ry="37" fill="#111120"/><path d="M881 1141 Q884 712 928 706 Q972 712 975 1141Z" fill="#111120"/><ellipse cx="1003" cy="684" rx="39" ry="46" fill="#10101c"/><path d="M945 1141 Q949 719 1003 711 Q1057 719 1061 1141Z" fill="#10101c"/><ellipse cx="1085" cy="686" rx="36" ry="43" fill="#0f0f1a"/><path d="M1030 1141 Q1034 718 1085 711 Q1135 718 1139 1141Z" fill="#0f0f1a"/><ellipse cx="1157" cy="693" rx="37" ry="45" fill="#0f0f1a"/><path d="M1100 1141 Q1104 727 1157 719 Q1209 727 1213 1141Z" fill="#0f0f1a"/><ellipse cx="1301" cy="680" rx="34" ry="41" fill="#10101c"/><path d="M1250 1141 Q1253 711 1301 704 Q1349 711 1352 1141Z" fill="#10101c"/><ellipse cx="1383" cy="700" rx="39" ry="47" fill="#111120"/><path d="M1325 1141 Q1329 736 1383 728 Q1438 736 1442 1141Z" fill="#111120"/><ellipse cx="1460" cy="679" rx="33" ry="40" fill="#10101c"/><path d="M1410 1141 Q1413 709 1460 702 Q1507 709 1510 1141Z" fill="#10101c"/><ellipse cx="1530" cy="698" rx="30" ry="36" fill="#111120"/><path d="M1485 1141 Q1488 724 1530 718 Q1572 724 1575 1141Z" fill="#111120"/><ellipse cx="1595" cy="695" rx="33" ry="40" fill="#111120"/><path d="M1545 1141 Q1549 725 1595 718 Q1641 725 1644 1141Z" fill="#111120"/><ellipse cx="1669" cy="680" rx="36" ry="44" fill="#0f0f1a"/><path d="M1614 1141 Q1618 712 1669 705 Q1720 712 1723 1141Z" fill="#0f0f1a"/><ellipse cx="1753" cy="692" rx="40" ry="47" fill="#10101c"/><path d="M1693 1141 Q1697 728 1753 720 Q1808 728 1812 1141Z" fill="#10101c"/><ellipse cx="1826" cy="689" rx="39" ry="46" fill="#10101c"/><path d="M1768 1141 Q1772 724 1826 716 Q1880 724 1884 1141Z" fill="#10101c"/><ellipse cx="1904" cy="685" rx="33" ry="40" fill="#111120"/><path d="M1854 1141 Q1857 715 1904 708 Q1950 715 1953 1141Z" fill="#111120"/><ellipse cx="1982" cy="689" rx="36" ry="43" fill="#0f0f1a"/><path d="M1927 1141 Q1931 722 1982 714 Q2032 722 2036 1141Z" fill="#0f0f1a"/><ellipse cx="2052" cy="679" rx="32" ry="38" fill="#111120"/><path d="M2005 1141 Q2008 708 2052 701 Q2097 708 2100 1141Z" fill="#111120"/><ellipse cx="-9" cy="757" rx="49" ry="58" fill="#0f0f1a"/><path d="M-82 1141 Q-77 801 -9 791 Q59 801 64 1141Z" fill="#0f0f1a"/><ellipse cx="112" cy="736" rx="51" ry="61" fill="#111120"/><path d="M36 1141 Q41 781 112 771 Q183 781 188 1141Z" fill="#111120"/><ellipse cx="207" cy="752" rx="48" ry="57" fill="#111120"/><path d="M135 1141 Q140 796 207 786 Q274 796 278 1141Z" fill="#111120"/><ellipse cx="305" cy="761" rx="40" ry="48" fill="#0f0f1a"/><path d="M244 1141 Q248 797 305 789 Q361 797 365 1141Z" fill="#0f0f1a"/><ellipse cx="405" cy="743" rx="51" ry="61" fill="#111120"/><path d="M329 1141 Q334 789 405 778 Q477 789 482 1141Z" fill="#111120"/><ellipse cx="507" cy="750" rx="48" ry="58" fill="#0f0f1a"/><path d="M435 1141 Q440 793 507 784 Q574 793 579 1141Z" fill="#0f0f1a"/><ellipse cx="606" cy="762" rx="51" ry="61" fill="#10101c"/><path d="M530 1141 Q535 808 606 798 Q678 808 683 1141Z" fill="#10101c"/><ellipse cx="698" cy="760" rx="39" ry="47" fill="#111120"/><path d="M640 1141 Q644 795 698 788 Q753 795 757 1141Z" fill="#111120"/><ellipse cx="791" cy="738" rx="48" ry="57" fill="#10101c"/><path d="M719 1141 Q724 781 791 772 Q857 781 862 1141Z" fill="#10101c"/><ellipse cx="894" cy="748" rx="46" ry="55" fill="#111120"/><path d="M825 1141 Q830 790 894 780 Q958 790 963 1141Z" fill="#111120"/><ellipse cx="985" cy="735" rx="44" ry="52" fill="#0f0f1a"/><path d="M920 1141 Q924 774 985 765 Q1046 774 1050 1141Z" fill="#0f0f1a"/><ellipse cx="1065" cy="741" rx="45" ry="54" fill="#111120"/><path d="M998 1141 Q1002 781 1065 772 Q1127 781 1132 1141Z" fill="#111120"/><ellipse cx="1167" cy="751" rx="46" ry="55" fill="#111120"/><path d="M1098 1141 Q1103 792 1167 783 Q1231 792 1235 1141Z" fill="#111120"/><ellipse cx="1276" cy="741" rx="44" ry="52" fill="#111120"/><path d="M1211 1141 Q1215 780 1276 772 Q1337 780 1342 1141Z" fill="#111120"/><ellipse cx="1374" cy="758" rx="42" ry="51" fill="#111120"/><path d="M1311 1141 Q1315 796 1374 788 Q1433 796 1437 1141Z" fill="#111120"/><ellipse cx="1463" cy="737" rx="46" ry="56" fill="#0f0f1a"/><path d="M1393 1141 Q1398 779 1463 770 Q1528 779 1532 1141Z" fill="#0f0f1a"/><ellipse cx="1567" cy="763" rx="46" ry="55" fill="#10101c"/><path d="M1498 1141 Q1503 804 1567 795 Q1630 804 1635 1141Z" fill="#10101c"/><ellipse cx="1676" cy="765" rx="42" ry="50" fill="#0f0f1a"/><path d="M1613 1141 Q1617 802 1676 794 Q1734 802 1738 1141Z" fill="#0f0f1a"/><ellipse cx="1757" cy="737" rx="39" ry="47" fill="#111120"/><path d="M1698 1141 Q1702 772 1757 764 Q1811 772 1815 1141Z" fill="#111120"/><ellipse cx="1848" cy="748" rx="41" ry="50" fill="#10101c"/><path d="M1786 1141 Q1790 785 1848 777 Q1906 785 1910 1141Z" fill="#10101c"/><ellipse cx="1926" cy="746" rx="50" ry="60" fill="#0f0f1a"/><path d="M1851 1141 Q1856 791 1926 781 Q1996 791 2001 1141Z" fill="#0f0f1a"/><ellipse cx="2024" cy="762" rx="50" ry="60" fill="#111120"/><path d="M1949 1141 Q1954 807 2024 797 Q2095 807 2100 1141Z" fill="#111120"/><ellipse cx="-35" cy="812" rx="53" ry="64" fill="#111120"/><path d="M-115 1141 Q-110 860 -35 849 Q40 860 45 1141Z" fill="#111120"/><ellipse cx="91" cy="844" rx="55" ry="66" fill="#10101c"/><path d="M9 1141 Q14 893 91 882 Q167 893 172 1141Z" fill="#10101c"/><ellipse cx="204" cy="820" rx="52" ry="62" fill="#0f0f1a"/><path d="M127 1141 Q132 867 204 857 Q277 867 282 1141Z" fill="#0f0f1a"/><ellipse cx="329" cy="813" rx="56" ry="67" fill="#0f0f1a"/><path d="M245 1141 Q251 863 329 852 Q408 863 414 1141Z" fill="#0f0f1a"/><ellipse cx="444" cy="811" rx="57" ry="68" fill="#10101c"/><path d="M358 1141 Q364 862 444 851 Q524 862 530 1141Z" fill="#10101c"/><ellipse cx="578" cy="819" rx="61" ry="73" fill="#10101c"/><path d="M486 1141 Q492 874 578 862 Q663 874 669 1141Z" fill="#10101c"/><ellipse cx="723" cy="836" rx="56" ry="67" fill="#0f0f1a"/><path d="M639 1141 Q644 886 723 875 Q801 886 806 1141Z" fill="#0f0f1a"/><ellipse cx="861" cy="821" rx="59" ry="71" fill="#0f0f1a"/><path d="M772 1141 Q778 874 861 862 Q944 874 950 1141Z" fill="#0f0f1a"/><ellipse cx="984" cy="835" rx="49" ry="59" fill="#10101c"/><path d="M910 1141 Q915 879 984 869 Q1053 879 1058 1141Z" fill="#10101c"/><ellipse cx="1090" cy="823" rx="65" ry="78" fill="#111120"/><path d="M992 1141 Q998 882 1090 869 Q1181 882 1188 1141Z" fill="#111120"/><ellipse cx="1217" cy="840" rx="66" ry="79" fill="#111120"/><path d="M1118 1141 Q1125 899 1217 886 Q1310 899 1316 1141Z" fill="#111120"/><ellipse cx="1350" cy="846" rx="48" ry="58" fill="#111120"/><path d="M1277 1141 Q1282 889 1350 880 Q1417 889 1422 1141Z" fill="#111120"/><ellipse cx="1464" cy="821" rx="56" ry="67" fill="#111120"/><path d="M1381 1141 Q1387 871 1464 860 Q1542 871 1548 1141Z" fill="#111120"/><ellipse cx="1589" cy="822" rx="54" ry="65" fill="#111120"/><path d="M1508 1141 Q1514 871 1589 860 Q1665 871 1671 1141Z" fill="#111120"/><ellipse cx="1693" cy="813" rx="55" ry="65" fill="#111120"/><path d="M1611 1141 Q1616 862 1693 851 Q1769 862 1774 1141Z" fill="#111120"/><ellipse cx="1793" cy="843" rx="65" ry="78" fill="#0f0f1a"/><path d="M1695 1141 Q1702 901 1793 888 Q1884 901 1891 1141Z" fill="#0f0f1a"/><ellipse cx="1925" cy="821" rx="50" ry="60" fill="#0f0f1a"/><path d="M1850 1141 Q1855 866 1925 856 Q1995 866 2000 1141Z" fill="#0f0f1a"/><ellipse cx="2034" cy="849" rx="52" ry="62" fill="#0f0f1a"/><path d="M1957 1141 Q1962 895 2034 885 Q2106 895 2112 1141Z" fill="#0f0f1a"/><ellipse cx="-25" cy="942" rx="60" ry="72" fill="#0f0f1a"/><path d="M-115 1141 Q-109 996 -25 984 Q59 996 65 1141Z" fill="#0f0f1a"/><ellipse cx="91" cy="945" rx="63" ry="76" fill="#10101c"/><path d="M-4 1141 Q3 1002 91 989 Q179 1002 186 1141Z" fill="#10101c"/><ellipse cx="213" cy="906" rx="63" ry="75" fill="#0f0f1a"/><path d="M119 1141 Q125 962 213 950 Q301 962 307 1141Z" fill="#0f0f1a"/><ellipse cx="348" cy="920" rx="77" ry="93" fill="#111120"/><path d="M232 1141 Q240 990 348 975 Q456 990 464 1141Z" fill="#111120"/><ellipse cx="495" cy="912" rx="66" ry="79" fill="#111120"/><path d="M396 1141 Q403 971 495 958 Q588 971 594 1141Z" fill="#111120"/><ellipse cx="659" cy="927" rx="71" ry="85" fill="#10101c"/><path d="M553 1141 Q560 991 659 977 Q759 991 766 1141Z" fill="#10101c"/><ellipse cx="809" cy="943" rx="62" ry="74" fill="#10101c"/><path d="M716 1141 Q722 998 809 986 Q895 998 901 1141Z" fill="#10101c"/><ellipse cx="933" cy="930" rx="84" ry="101" fill="#10101c"/><path d="M807 1141 Q815 1005 933 989 Q1050 1005 1058 1141Z" fill="#10101c"/><ellipse cx="1127" cy="940" rx="66" ry="79" fill="#0f0f1a"/><path d="M1028 1141 Q1035 999 1127 986 Q1219 999 1225 1141Z" fill="#0f0f1a"/><ellipse cx="1263" cy="944" rx="73" ry="88" fill="#111120"/><path d="M1153 1141 Q1160 1010 1263 995 Q1366 1010 1373 1141Z" fill="#111120"/><ellipse cx="1403" cy="932" rx="65" ry="78" fill="#0f0f1a"/><path d="M1306 1141 Q1313 991 1403 978 Q1494 991 1500 1141Z" fill="#0f0f1a"/><ellipse cx="1541" cy="943" rx="73" ry="88" fill="#0f0f1a"/><path d="M1431 1141 Q1438 1009 1541 994 Q1644 1009 1651 1141Z" fill="#0f0f1a"/><ellipse cx="1716" cy="921" rx="64" ry="77" fill="#0f0f1a"/><path d="M1619 1141 Q1626 979 1716 966 Q1806 979 1813 1141Z" fill="#0f0f1a"/><ellipse cx="1842" cy="943" rx="70" ry="85" fill="#111120"/><path d="M1736 1141 Q1743 1007 1842 992 Q1940 1007 1947 1141Z" fill="#111120"/><ellipse cx="2004" cy="908" rx="83" ry="100" fill="#111120"/><path d="M1879 1141 Q1887 983 2004 966 Q2121 983 2129 1141Z" fill="#111120"/><ellipse cx="-42" cy="1040" rx="86" ry="103" fill="#111120"/><path d="M-171 1141 Q-162 1118 -42 1100 Q79 1118 87 1141Z" fill="#111120"/><ellipse cx="122" cy="1021" rx="88" ry="105" fill="#0f0f1a"/><path d="M-10 1141 Q-1 1100 122 1083 Q245 1100 253 1141Z" fill="#0f0f1a"/><ellipse cx="302" cy="1026" rx="80" ry="95" fill="#111120"/><path d="M183 1141 Q191 1098 302 1082 Q413 1098 421 1141Z" fill="#111120"/><ellipse cx="487" cy="1078" rx="82" ry="98" fill="#10101c"/><path d="M365 1141 Q373 1151 487 1135 Q602 1151 610 1141Z" fill="#10101c"/><ellipse cx="655" cy="1072" rx="93" ry="111" fill="#111120"/><path d="M516 1141 Q525 1156 655 1137 Q785 1156 794 1141Z" fill="#111120"/><ellipse cx="885" cy="1079" rx="99" ry="119" fill="#0f0f1a"/><path d="M736 1141 Q746 1168 885 1149 Q1024 1168 1034 1141Z" fill="#0f0f1a"/><ellipse cx="1074" cy="1077" rx="85" ry="102" fill="#111120"/><path d="M947 1141 Q956 1153 1074 1136 Q1193 1153 1201 1141Z" fill="#111120"/><ellipse cx="1235" cy="1026" rx="74" ry="88" fill="#0f0f1a"/><path d="M1125 1141 Q1132 1093 1235 1078 Q1338 1093 1346 1141Z" fill="#0f0f1a"/><ellipse cx="1399" cy="1063" rx="81" ry="97" fill="#111120"/><path d="M1278 1141 Q1286 1136 1399 1120 Q1513 1136 1521 1141Z" fill="#111120"/><ellipse cx="1589" cy="1024" rx="85" ry="102" fill="#0f0f1a"/><path d="M1461 1141 Q1470 1100 1589 1083 Q1709 1100 1717 1141Z" fill="#0f0f1a"/><ellipse cx="1764" cy="1029" rx="98" ry="118" fill="#10101c"/><path d="M1616 1141 Q1626 1117 1764 1098 Q1901 1117 1911 1141Z" fill="#10101c"/><ellipse cx="1951" cy="1074" rx="81" ry="97" fill="#10101c"/><path d="M1830 1141 Q1838 1146 1951 1130 Q2064 1146 2072 1141Z" fill="#10101c"/><ellipse cx="-17" cy="1185" rx="106" ry="128" fill="#10101c"/><path d="M-177 1141 Q-166 1280 -17 1259 Q131 1280 142 1141Z" fill="#10101c"/><ellipse cx="229" cy="1173" rx="88" ry="105" fill="#0f0f1a"/><path d="M98 1141 Q107 1252 229 1235 Q352 1252 361 1141Z" fill="#0f0f1a"/><ellipse cx="411" cy="1174" rx="92" ry="110" fill="#111120"/><path d="M273 1141 Q282 1257 411 1238 Q539 1257 549 1141Z" fill="#111120"/><ellipse cx="613" cy="1146" rx="100" ry="120" fill="#0f0f1a"/><path d="M463 1141 Q473 1236 613 1216 Q754 1236 764 1141Z" fill="#0f0f1a"/><ellipse cx="831" cy="1147" rx="99" ry="119" fill="#0f0f1a"/><path d="M683 1141 Q693 1236 831 1216 Q970 1236 980 1141Z" fill="#0f0f1a"/><ellipse cx="1048" cy="1169" rx="114" ry="137" fill="#10101c"/><path d="M877 1141 Q889 1272 1048 1249 Q1208 1272 1219 1141Z" fill="#10101c"/><ellipse cx="1269" cy="1190" rx="92" ry="111" fill="#0f0f1a"/><path d="M1131 1141 Q1140 1273 1269 1254 Q1399 1273 1408 1141Z" fill="#0f0f1a"/><ellipse cx="1481" cy="1160" rx="87" ry="104" fill="#10101c"/><path d="M1351 1141 Q1360 1238 1481 1221 Q1602 1238 1611 1141Z" fill="#10101c"/><ellipse cx="1678" cy="1194" rx="111" ry="134" fill="#10101c"/><path d="M1511 1141 Q1523 1294 1678 1272 Q1834 1294 1845 1141Z" fill="#10101c"/><ellipse cx="1887" cy="1159" rx="95" ry="115" fill="#0f0f1a"/><path d="M1744 1141 Q1753 1245 1887 1226 Q2020 1245 2030 1141Z" fill="#0f0f1a"/><ellipse cx="2062" cy="1187" rx="88" ry="106" fill="#10101c"/><path d="M1930 1141 Q1938 1266 2062 1249 Q2186 1266 2195 1141Z" fill="#10101c"/></g><g filter="url(#blurH)"><path d="M136 625 A23 27 0 0 1 162 612" fill="none" stroke="#2c48a0" stroke-width="3" opacity="0.3"/><path d="M358 630 A31 37 0 0 1 387 611" fill="none" stroke="#2c48a0" stroke-width="3" opacity="0.3"/><path d="M1535 622 A25 30 0 0 1 1563 603" fill="none" stroke="#2c48a0" stroke-width="3" opacity="0.3"/><path d="M1865 637 A25 30 0 0 1 1875 621" fill="none" stroke="#2c48a0" stroke-width="3" opacity="0.3"/><path d="M-63 671 A30 36 0 0 1 -25 666" fill="none" stroke="#2c48a0" stroke-width="3" opacity="0.3"/><path d="M72 681 A39 47 0 0 1 84 647" fill="none" stroke="#2c48a0" stroke-width="3" opacity="0.3"/><path d="M558 661 A31 37 0 0 1 589 653" fill="none" stroke="#2c48a0" stroke-width="3" opacity="0.3"/><path d="M605 679 A39 47 0 0 1 634 654" fill="none" stroke="#2c48a0" stroke-width="3" opacity="0.3"/><path d="M1050 675 A36 43 0 0 1 1090 643" fill="none" stroke="#2c48a0" stroke-width="3" opacity="0.3"/><path d="M1718 669 A40 47 0 0 1 1743 646" fill="none" stroke="#2c48a0" stroke-width="3" opacity="0.3"/><path d="M661 747 A39 47 0 0 1 703 714" fill="none" stroke="#2c48a0" stroke-width="3" opacity="0.3"/><path d="M1130 719 A46 55 0 0 1 1160 697" fill="none" stroke="#2c48a0" stroke-width="3" opacity="0.3"/><path d="M1524 742 A46 55 0 0 1 1576 709" fill="none" stroke="#2c48a0" stroke-width="3" opacity="0.3"/><path d="M1881 720 A50 60 0 0 1 1945 690" fill="none" stroke="#2c48a0" stroke-width="4" opacity="0.3"/><path d="M-83 785 A53 64 0 0 1 -42 748" fill="none" stroke="#2c48a0" stroke-width="4" opacity="0.3"/><path d="M51 799 A55 66 0 0 1 109 783" fill="none" stroke="#2c48a0" stroke-width="4" opacity="0.3"/><path d="M161 786 A52 62 0 0 1 218 761" fill="none" stroke="#2c48a0" stroke-width="4" opacity="0.3"/><path d="M282 776 A56 67 0 0 1 340 746" fill="none" stroke="#2c48a0" stroke-width="4" opacity="0.3"/><path d="M673 804 A56 67 0 0 1 730 769" fill="none" stroke="#2c48a0" stroke-width="4" opacity="0.3"/><path d="M804 801 A59 71 0 0 1 833 758" fill="none" stroke="#2c48a0" stroke-width="4" opacity="0.3"/><path d="M1420 781 A56 67 0 0 1 1495 765" fill="none" stroke="#2c48a0" stroke-width="4" opacity="0.3"/><path d="M1645 781 A55 65 0 0 1 1673 752" fill="none" stroke="#2c48a0" stroke-width="4" opacity="0.3"/><path d="M1991 815 A52 62 0 0 1 2042 788" fill="none" stroke="#2c48a0" stroke-width="4" opacity="0.3"/><path d="M-83 925 A60 72 0 0 1 -19 871" fill="none" stroke="#2c48a0" stroke-width="4" opacity="0.3"/><path d="M281 875 A77 93 0 0 1 371 832" fill="none" stroke="#2c48a0" stroke-width="5" opacity="0.3"/><path d="M755 907 A62 74 0 0 1 836 877" fill="none" stroke="#2c48a0" stroke-width="4" opacity="0.3"/><path d="M1209 885 A73 88 0 0 1 1274 856" fill="none" stroke="#2c48a0" stroke-width="5" opacity="0.3"/><path d="M-124 1011 A86 103 0 0 1 -64 941" fill="none" stroke="#2c48a0" stroke-width="6" opacity="0.3"/><path d="M786 1077 A99 119 0 0 1 842 972" fill="none" stroke="#2c48a0" stroke-width="7" opacity="0.3"/><path d="M1165 999 A74 88 0 0 1 1230 938" fill="none" stroke="#2c48a0" stroke-width="5" opacity="0.3"/><path d="M1522 961 A85 102 0 0 1 1628 932" fill="none" stroke="#2c48a0" stroke-width="6" opacity="0.3"/><path d="M-107 1116 A106 128 0 0 1 23 1067" fill="none" stroke="#2c48a0" stroke-width="7" opacity="0.3"/><path d="M1197 1120 A92 111 0 0 1 1308 1089" fill="none" stroke="#2c48a0" stroke-width="6" opacity="0.3"/><path d="M1568 1176 A111 134 0 0 1 1620 1080" fill="none" stroke="#2c48a0" stroke-width="8" opacity="0.3"/><path d="M1992 1123 A88 106 0 0 1 2052 1082" fill="none" stroke="#2c48a0" stroke-width="6" opacity="0.3"/></g><ellipse cx="975" cy="700" rx="480" ry="140" fill="url(#hazeG)"/><rect width="1994" height="1131" fill="url(#botG)"/></g></g></svg>
<div class="a" style="left:651px;top:1602px;width:711px;height:121px;border-radius:61px;background:#222327"></div>
<svg class="a" style="left:710px;top:1630px" width="70" height="60" viewBox="710 1630 70 60"><path d="M721.5 1651 V1645.5 Q721.5 1642.1 724.9 1642.1 H765.8 Q769.2 1642.1 769.2 1645.5 V1678.8 Q769.2 1682.2 765.8 1682.2 H746" fill="none" stroke="#fff" stroke-width="3.6"/><path d="M720 1660.5 A21.7 21.7 0 0 1 741.7 1682.4" fill="none" stroke="#fff" stroke-width="3.6"/><path d="M720 1669.3 A12.9 12.9 0 0 1 732.9 1682.4" fill="none" stroke="#fff" stroke-width="3.6"/><path d="M720 1676.4 A6 6 0 0 1 726 1682.4 H720Z" fill="#fff"/></svg>
<div class="a txt" style="left:805px;top:1640px;font-size:37px;line-height:44px;color:#fff">Afspilles på et fjernsyn i stuen</div>
<div class="a txt" style="left:621px;top:1788px;font-size:41px;line-height:50px;color:#232427">Livekoncert – Palm Springs</div>
<svg class="a" style="left:2500px;top:538px" width="36" height="40" viewBox="0 0 36 40"><rect x="12" y="4" width="10" height="20" rx="5" fill="#222"/><path d="M6 18 Q6 30 17 30 Q28 30 28 18 M17 30 V38" fill="none" stroke="#222" stroke-width="2.6"/></svg>

<!-- sidebar skeleton -->
<div class="a" style="left:2648px;top:879px;width:287px;height:166px;border-radius:14px;background:#848589"></div>
<div class="a" style="left:2648px;top:1062px;width:287px;height:166px;border-radius:14px;background:#848589"></div>
<div class="a" style="left:2943px;top:1067px;width:287px;height:31px;border-radius:16px;background:#8a8b8c"></div>
<div class="a" style="left:2943px;top:1104px;width:343px;height:32px;border-radius:16px;background:#8a8b8c"></div>
<div class="a" style="left:2943px;top:1142px;width:152px;height:26px;border-radius:13px;background:#8a8b8c"></div>
<div class="a" style="left:2943px;top:1173px;width:228px;height:26px;border-radius:13px;background:#8a8b8c"></div>
<div class="a" style="left:2648px;top:1242px;width:287px;height:166px;border-radius:14px;background:#848589"></div>
<div class="a" style="left:2943px;top:1242px;width:287px;height:32px;border-radius:16px;background:#8a8b8c"></div>
<div class="a" style="left:2943px;top:1279px;width:343px;height:33px;border-radius:16px;background:#8a8b8c"></div>
<div class="a" style="left:2943px;top:1321px;width:152px;height:26px;border-radius:13px;background:#8a8b8c"></div>
<div class="a" style="left:2943px;top:1355px;width:251px;height:25px;border-radius:13px;background:#8a8b8c"></div>
<div class="a" style="left:2648px;top:1421px;width:287px;height:170px;border-radius:14px;background:#848589"></div>
<div class="a" style="left:2943px;top:1432px;width:287px;height:32px;border-radius:16px;background:#8a8b8c"></div>
<div class="a" style="left:2943px;top:1469px;width:208px;height:26px;border-radius:13px;background:#8a8b8c"></div>
<div class="a" style="left:2648px;top:1600px;width:287px;height:166px;border-radius:14px;background:#848589"></div>
<div class="a" style="left:2943px;top:1606px;width:356px;height:32px;border-radius:16px;background:#8a8b8c"></div>
<div class="a" style="left:2943px;top:1644px;width:308px;height:32px;border-radius:16px;background:#8a8b8c"></div>
<div class="a" style="left:2943px;top:1683px;width:152px;height:25px;border-radius:13px;background:#8a8b8c"></div>
<div class="a" style="left:2943px;top:1713px;width:334px;height:26px;border-radius:13px;background:#8a8b8c"></div>
<div class="a" style="left:2648px;top:1776px;width:287px;height:166px;border-radius:14px;background:#848589"></div>
<div class="a" style="left:2943px;top:1776px;width:334px;height:33px;border-radius:16px;background:#8a8b8c"></div>
<div class="a" style="left:2943px;top:1815px;width:308px;height:31px;border-radius:16px;background:#8a8b8c"></div>
<div class="a" style="left:2943px;top:1853px;width:152px;height:26px;border-radius:13px;background:#8a8b8c"></div>
<!-- window bottom cover (clip to window) -->
<div class="a" style="left:0;top:1880px;width:3840px;height:280px;background:#000"></div>

<div class="a" style="left:496px;top:405px;width:3px;height:1459px;background:#9a9b9c"></div>
<div class="a" style="left:3341px;top:405px;width:3px;height:1459px;background:#97989a"></div>
<!-- window corner notches -->
<div class="notch" style="left:496px;top:280px;width:8px;height:16px"></div>
<div class="notch" style="left:3336px;top:280px;width:8px;height:16px"></div>
<div class="notch" style="left:496px;top:1864px;width:8px;height:16px"></div>
<div class="notch" style="left:504px;top:1872px;width:8px;height:8px"></div>
<div class="notch" style="left:3336px;top:1864px;width:8px;height:16px"></div>
<div class="notch" style="left:3328px;top:1872px;width:8px;height:8px"></div>

<!-- popup -->
<div class="a" style="left:2508px;top:557px;width:801px;height:471px;border-radius:14px;box-shadow:0 12px 44px rgba(0,0,0,0.2),0 3px 10px rgba(0,0,0,0.1);overflow:hidden;background:#fff">
  <div class="a" style="left:0;top:0;width:801px;height:265px;background:#060a14"></div>
  <svg class="a" style="left:435px;top:0;filter:brightness(1.3) saturate(1.15)" width="366" height="265" viewBox="0 0 366 265"><use href="#scene" transform="translate(-100,-21) scale(0.285)"/></svg>
  <div class="a" style="left:41px;top:39px;width:57px;height:16px;border-radius:8px;background:#ccd1f8"></div>
  <div class="a" style="left:41px;top:88px;width:257px;height:16px;border-radius:8px;background:#ccd1f8"></div>
  <div class="a" style="left:41px;top:115px;width:133px;height:17px;border-radius:8.5px;background:#ccd1f8"></div>
  <svg class="a" style="left:0;top:0" width="435" height="265" viewBox="0 0 435 265"><g fill="#ccd1f8" stroke="#ccd1f8" stroke-width="3" stroke-linejoin="round">
<path d="M50.5 203.6 L64.6 193.5 V213.7Z"/><path d="M70.9 203.6 L85.2 193.5 V213.7Z"/>
<path d="M138.5 191.5 L160.2 203.6 L138.5 216Z"/>
<path d="M208.8 193.5 L223.4 203.6 L208.8 213.7Z"/><path d="M229.2 193.5 L243.3 203.6 L229.2 213.7Z"/>
</g>
<rect x="276.2" y="178.3" width="3.9" height="50.8" rx="1.95" fill="#ccd1f8"/>
<g fill="none" stroke="#ccd1f8" stroke-width="3.2"><path d="M308.5 183.5 L322 197"/><path d="M307.7 197 H323.1 V182.6"/><path d="M327.4 184.5 H348.5 Q351 184.5 351 187 V203"/><path d="M309.5 202.3 V214.5 Q309.5 217 312 217 H330"/></g>
<rect x="333.7" y="206" width="19.1" height="12.5" fill="#ccd1f8"/>
</svg>
  <!-- white section -->
  <div class="a" style="left:0;top:369px;width:801px;height:2px;background:#8e93cc"></div>

  <div class="a txt" style="left:124px;top:295px;font-size:35px;line-height:44px;color:#1f1f1f">Livetekstning</div>


  <div class="a txt" style="left:124px;top:397px;font-size:35px;line-height:44px;color:#1f1f1f">Indstillinger for undertekster</div>
<svg class="a" style="left:0;top:280px" width="801" height="191" viewBox="0 280 801 191"><path d="M62.98 408.13 L65.89 406.86 L65.86 399.97 L74.14 399.97 L74.11 406.86 L77.03 408.13 L79.58 410.02 L85.54 406.55 L89.68 413.72 L83.69 417.14 L84.05 420.30 L83.69 423.46 L89.68 426.88 L85.54 434.05 L79.58 430.58 L77.03 432.47 L74.11 433.74 L74.14 440.63 L65.86 440.63 L65.89 433.74 L62.97 432.47 L60.42 430.58 L54.46 434.05 L50.32 426.88 L56.31 423.46 L55.95 420.30 L56.31 417.14 L50.32 413.72 L54.46 406.55 L60.42 410.02Z" fill="none" stroke="#111" stroke-width="3.5" stroke-linejoin="miter"/><circle cx="70" cy="420.3" r="7" fill="#111"/><rect x="49.1" y="300.6" width="41.5" height="32.7" rx="3" fill="none" stroke="#111" stroke-width="3.2"/><path d="M56.3 316.1 H59.8 M63.2 316.1 H83 M56.3 322.8 H76.3 M80 322.8 H83" stroke="#111" stroke-width="3.4"/><rect x="709" y="306" width="45" height="23" rx="11.5" fill="none" stroke="#111" stroke-width="4"/><circle cx="720.3" cy="317.4" r="6.6" fill="#111"/><path d="M744.8 402.4 H729.7 Q727.7 402.4 727.7 404.4 V437.3 Q727.7 439.3 729.7 439.3 H762.9 Q764.9 439.3 764.9 437.3 V422" fill="none" stroke="#111" stroke-width="3.4"/><path d="M748.8 402.4 H764.9 V418.3 M739.7 427.4 L764 403.2" fill="none" stroke="#111" stroke-width="3.4"/></svg>

</div>
</body></html>
